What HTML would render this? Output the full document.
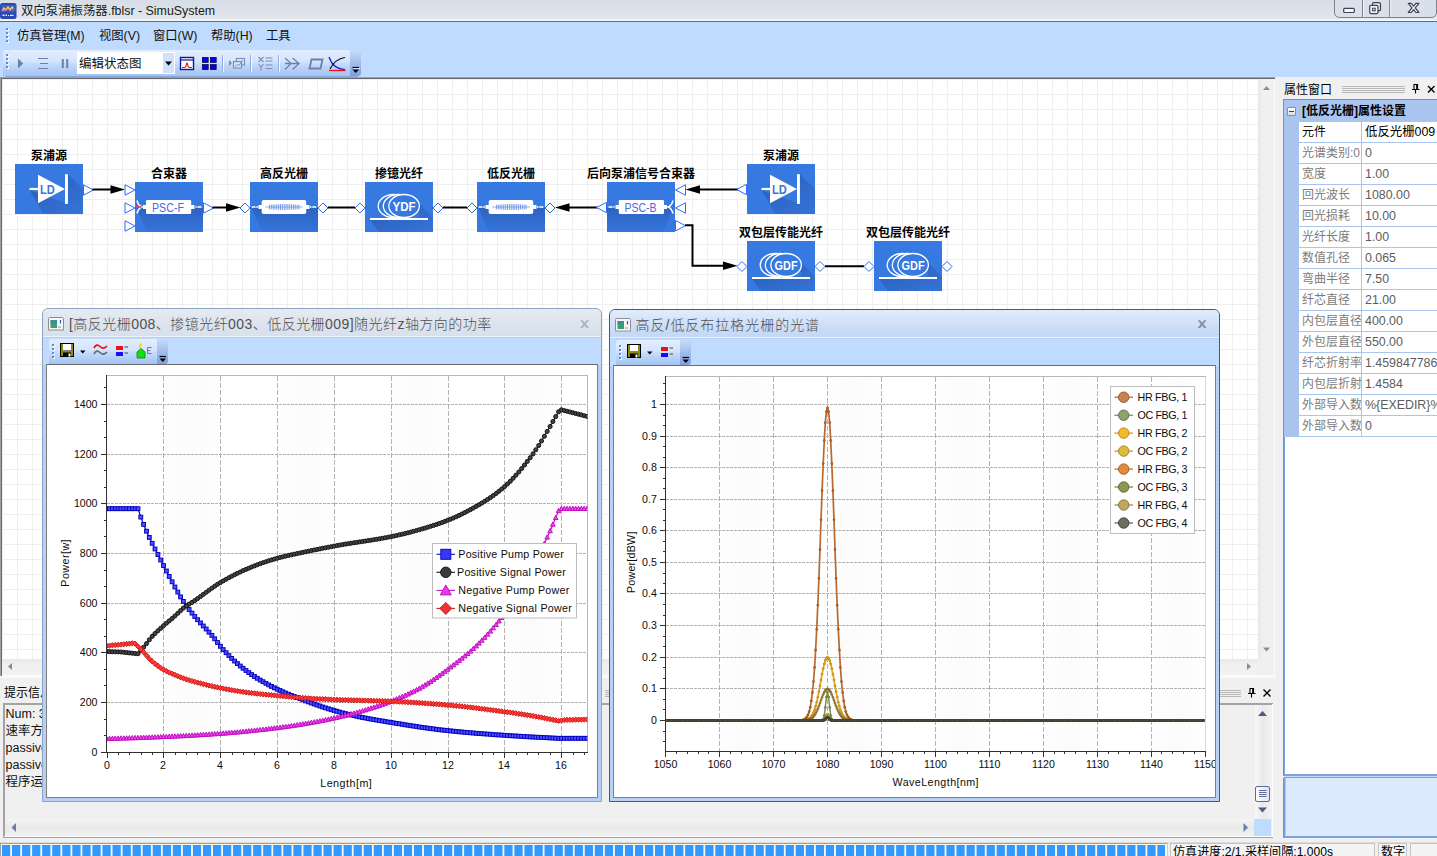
<!DOCTYPE html>
<html lang="zh"><head><meta charset="utf-8"><title>SimuSystem</title>
<style>
*{box-sizing:border-box;margin:0;padding:0}
html,body{width:1437px;height:856px;overflow:hidden;background:#f0f0f0}
body{position:relative;font-family:"Liberation Sans","Noto Sans CJK SC",sans-serif;font-size:12px;color:#000}
.abs{position:absolute}
#titlebar{left:0;top:0;width:1437px;height:21px;background:linear-gradient(#d7dde6,#e1e6ec 85%,#f4f6f8 96%)}
#titlebar .t{left:21px;top:1px;height:21px;line-height:21px;font-size:12.4px;color:#1a1a1a;white-space:nowrap}
#menubar{left:0;top:21px;width:1437px;height:57px;background:#bfdbff;border-top:1px solid #6c6c6c}
.menu{top:27px;height:18px;line-height:18px;font-size:12.3px;white-space:nowrap;color:#111}
svg{position:absolute;overflow:visible}
svg text{font-family:"Liberation Sans","Noto Sans CJK SC",sans-serif}
</style></head>
<body>
<div id="titlebar" class="abs"><div class="t abs">双向泵浦振荡器.fblsr - SimuSystem</div></div>
<div id="menubar" class="abs"></div>
<div class="menu abs" style="left:17px">仿真管理(M)</div>
<div class="menu abs" style="left:99px">视图(V)</div>
<div class="menu abs" style="left:153px">窗口(W)</div>
<div class="menu abs" style="left:211px">帮助(H)</div>
<div class="menu abs" style="left:266px">工具</div>
<svg style="left:-0.500px;top:2px" width="20" height="20" viewBox="0 0 20 20">
<rect x="0" y="1" width="16.500" height="16" rx="2.500" fill="#2a49b2"/>
<rect x="1.5" y="3" width="14" height="7" fill="#3b5cc0"/>
<path d="M2 9 L4 6 L6 8 L8 5 L10 8 L12 5 L14 7" stroke="#e8d84a" stroke-width="1.4" fill="none"/>
<path d="M2 8 L5 9 L8 7 L11 9 L14 6" stroke="#e04aa0" stroke-width="1" fill="none"/>
<path d="M2.500 12.500 h2 v1.600 h-2z M5.500 12.500 h1.500 v1.600 h-1.500z M8 13 h1 v1.100 h-1z M10 12.800 h3.500 v1.300 h-3.500z" fill="#e9ecf6"/>
</svg>
<svg style="left:1330px;top:0" width="107" height="21" viewBox="0 0 107 21">
<path d="M4.5 -1 V12 Q4.500 17.500 10 17.500 H101 Q106.500 17.500 106.500 12 V-1" fill="#d9e0e9" stroke="#7b8492" stroke-width="1"/>
<path d="M32.500 0 V17 M59.600 0 V17" stroke="#7b8492" stroke-width="1"/>
<path d="M33.500 0 V17 M60.600 0 V17" stroke="#eef2f7" stroke-width="1"/>
<rect x="13.700" y="8.300" width="10.600" height="4.200" rx="1" fill="#f4f4f0" stroke="#3c4258" stroke-width="1.200"/>
<rect x="42.500" y="2.700" width="8" height="8" rx="1.300" fill="#eceef2" stroke="#3c4258" stroke-width="1.200"/>
<rect x="39.700" y="5.300" width="8.300" height="8.300" rx="1.300" fill="#f4f4f0" stroke="#3c4258" stroke-width="1.200"/>
<rect x="42.600" y="8.200" width="2.600" height="2.600" fill="#d9e0e9" stroke="#3c4258" stroke-width="1"/>
<path d="M78.300 3.300 H81.300 L83.600 6.200 L85.900 3.300 H88.900 L85.200 7.900 L88.900 12.500 H85.900 L83.600 9.600 L81.300 12.500 H78.300 L82 7.900 Z" fill="#f4f4f0" stroke="#3c4258" stroke-width="1.200" stroke-linejoin="round"/>
</svg>
<svg style="left:0;top:0" width="400" height="80" viewBox="0 0 400 80"><defs><linearGradient id="tbg" x1="0" y1="0" x2="0" y2="1"><stop offset="0" stop-color="#e3eefe"/><stop offset="0.45" stop-color="#d3e4fd"/><stop offset="0.55" stop-color="#c3dafb"/><stop offset="1" stop-color="#a3c3f2"/></linearGradient>
<linearGradient id="tbo" x1="0" y1="0" x2="0" y2="1"><stop offset="0" stop-color="#c6dbfa"/><stop offset="1" stop-color="#7ea0dc"/></linearGradient></defs><rect x="6" y="28" width="2" height="2" fill="#5a8ad8"/><rect x="7" y="29" width="2" height="2" fill="#ffffff"/><rect x="6" y="28" width="2" height="2" fill="#5a8ad8"/><rect x="6" y="32" width="2" height="2" fill="#5a8ad8"/><rect x="7" y="33" width="2" height="2" fill="#ffffff"/><rect x="6" y="32" width="2" height="2" fill="#5a8ad8"/><rect x="6" y="36" width="2" height="2" fill="#5a8ad8"/><rect x="7" y="37" width="2" height="2" fill="#ffffff"/><rect x="6" y="36" width="2" height="2" fill="#5a8ad8"/><rect x="6" y="40" width="2" height="2" fill="#5a8ad8"/><rect x="7" y="41" width="2" height="2" fill="#ffffff"/><rect x="6" y="40" width="2" height="2" fill="#5a8ad8"/><path d="M3 76 V53 Q3 50 6 50 H358 Q361 50 361 53 V73 Q361 76 358 76 Z" fill="url(#tbo)"/><path d="M3 75 V53 Q3 50 6 50 H350 V76 H5 Q3 76 3 75 Z" fill="url(#tbg)"/><path d="M5 76.500 H358" stroke="#86a6de" stroke-width="1"/><rect x="6" y="54" width="2" height="2" fill="#5a8ad8"/><rect x="7" y="55" width="2" height="2" fill="#ffffff"/><rect x="6" y="54" width="2" height="2" fill="#5a8ad8"/><rect x="6" y="58" width="2" height="2" fill="#5a8ad8"/><rect x="7" y="59" width="2" height="2" fill="#ffffff"/><rect x="6" y="58" width="2" height="2" fill="#5a8ad8"/><rect x="6" y="62" width="2" height="2" fill="#5a8ad8"/><rect x="7" y="63" width="2" height="2" fill="#ffffff"/><rect x="6" y="62" width="2" height="2" fill="#5a8ad8"/><rect x="6" y="66" width="2" height="2" fill="#5a8ad8"/><rect x="7" y="67" width="2" height="2" fill="#ffffff"/><rect x="6" y="66" width="2" height="2" fill="#5a8ad8"/><path d="M18 58.500 L23.200 63.500 L18 68.500 Z" fill="#6f80a6"/><path d="M38 58.500 H48 M40 63.500 H48 M38 68.500 H48" stroke="#6f80a6" stroke-width="1.200"/><path d="M62.800 59 V68 M67.200 59 V68" stroke="#6f80a6" stroke-width="2"/><rect x="77" y="52" width="86" height="22" fill="#ffffff"/><rect x="162.500" y="52.500" width="12" height="21" fill="#cfe1fb" stroke="#ffffff" stroke-width="1"/><path d="M165 61.500 H172 L168.500 65.500 Z" fill="#000"/><text x="79" y="67.500" font-size="12.500" fill="#111">编辑状态图</text><rect x="180.500" y="57.500" width="13" height="12" fill="#fff" stroke="#0a14a0" stroke-width="1.400"/><path d="M180.500 60 H193.500" stroke="#0a14a0" stroke-width="1.200"/><path d="M182 67.500 H184.500 Q186 67.500 186.500 64 Q187 62 187.500 64 Q188 67.500 189.500 67.500 H192" stroke="#e01010" stroke-width="1.100" fill="none"/><rect x="202.4" y="57.4" width="5.800" height="5" fill="#0000f0" stroke="#00003c" stroke-width="0.700"/><rect x="202.4" y="64.6" width="5.800" height="5" fill="#0000f0" stroke="#00003c" stroke-width="0.700"/><rect x="210.4" y="57.4" width="5.800" height="5" fill="#0000f0" stroke="#00003c" stroke-width="0.700"/><rect x="210.4" y="64.6" width="5.800" height="5" fill="#0000f0" stroke="#00003c" stroke-width="0.700"/><path d="M222.5 55 V72" stroke="#8fb0e6" stroke-width="1"/><path d="M223.5 55 V72" stroke="#f2f7ff" stroke-width="1"/><path d="M250.5 55 V72" stroke="#8fb0e6" stroke-width="1"/><path d="M251.5 55 V72" stroke="#f2f7ff" stroke-width="1"/><path d="M278.5 55 V72" stroke="#8fb0e6" stroke-width="1"/><path d="M279.5 55 V72" stroke="#f2f7ff" stroke-width="1"/><path d="M229 60 L232 63 L229 66 Z" fill="#7c8cae"/><rect x="236.500" y="58.500" width="8" height="6.500" fill="none" stroke="#7c8cae" stroke-width="1.100"/><rect x="233.500" y="61.500" width="8" height="6.500" fill="#d3e2f9" stroke="#7c8cae" stroke-width="1.100"/><path d="M235 66.500 L237.500 64.500 L239 65.500 L243 60" stroke="#7c8cae" stroke-width="0.900" fill="none"/><path d="M258.500 57 L263.500 62 M263.500 57 L258.500 62 M258.500 64 L261 67 L263.500 64 M261 67 V70.500" stroke="#7c8cae" stroke-width="1.100" fill="none"/><path d="M265.500 58 H272.500 M265.500 61 H272.500 M265.500 65 H272.500 M265.500 68.500 H272.500" stroke="#7c8cae" stroke-width="1.100"/><path d="M285 58 L291 63.500 L285 69.500 M285 63.500 H299 M292.500 58 L299 63.500 L292.500 69.500" stroke="#6f80a6" stroke-width="1.300" fill="none"/><path d="M311.500 59.500 H322.500 L320.500 68.500 H309.500 Z" stroke="#6f80a6" stroke-width="1.800" fill="none"/><path d="M329 57 Q333 69 345 69.500" stroke="#1818e0" stroke-width="1.200" fill="none"/><path d="M330 69 Q335 59 345 57.500" stroke="#101010" stroke-width="1.200" fill="none"/><path d="M329 70.500 H345.500" stroke="#f01010" stroke-width="1.300"/><path d="M352.500 67.500 H359" stroke="#000" stroke-width="1.200"/><path d="M352.500 69.500 H359 L355.750 73 Z" fill="#000"/><path d="M353.500 68.500 H360" stroke="#fff" stroke-width="1" opacity="0.700"/></svg>
<div class="abs" style="left:0;top:77px;width:1275px;height:599px;background:#a0a0a0"></div>
<div class="abs" style="left:1px;top:78px;width:1274px;height:598px;background:#696969"></div>
<div class="abs" style="left:2px;top:79px;width:1273px;height:597px;background:#fbfbfb"></div>
<div class="abs" style="left:2px;top:79px;width:1256px;height:580px;background-color:#fff;background-image:linear-gradient(to right,#efefef 1px,transparent 1px),linear-gradient(to bottom,#efefef 1px,transparent 1px);background-size:15px 15px;background-position:0px 0px"></div>
<div class="abs" style="left:1258px;top:79px;width:16px;height:580px;background:linear-gradient(to right,#e8e8e8,#f0f0f0 30%,#f1f1f1)"></div>
<div class="abs" style="left:2px;top:659px;width:1256px;height:16px;background:linear-gradient(#e8e8e8,#f0f0f0 30%,#f1f1f1)"></div>
<div class="abs" style="left:1258px;top:659px;width:16px;height:16px;background:#f0f0f0"></div>
<svg style="left:0;top:0" width="1437" height="856" viewBox="0 0 1437 856">
<defs>
<linearGradient id="shd" x1="0" y1="0" x2="1" y2="1"><stop offset="0" stop-color="#2b5db8"/><stop offset="1" stop-color="#3474d8"/></linearGradient>
<linearGradient id="shv" x1="0" y1="0" x2="0" y2="1"><stop offset="0" stop-color="#2e63bf"/><stop offset="1" stop-color="#3575dc"/></linearGradient>
<linearGradient id="shd2" x1="1" y1="0" x2="0" y2="1"><stop offset="0" stop-color="#2b5db8"/><stop offset="1" stop-color="#3474d8"/></linearGradient>
</defs>
<path d="M1263 90 L1266.500 86 L1270 90 Z" fill="#8c8c8c"/><path d="M1263 647.500 L1266.500 651.500 L1270 647.500 Z" fill="#8c8c8c"/><path d="M12 663 L8 666.500 L12 670 Z" fill="#8c8c8c"/><path d="M1247 663 L1251 666.500 L1247 670 Z" fill="#8c8c8c"/><text x="49" y="160" font-size="12" font-weight="700" text-anchor="middle" fill="#000">泵浦源</text><rect x="15" y="164" width="68" height="50" fill="#3679e0"/><path d="M29.5 190 L43.5 214 H83 V189 L68 174 V204 Z" fill="url(#shd)"/><path d="M29.5 189 H39" stroke="#fff" stroke-width="2.200"/><path d="M38 174.8 L65 189 L38 203.3 Z" fill="#fff"/><rect x="65" y="174.2" width="2.900" height="29.700" fill="#fff"/><text x="39.9" y="193.6" font-size="12.500" font-weight="700" fill="#3a74e0" textLength="14.800" lengthAdjust="spacingAndGlyphs">LD</text><path d="M83.5 184.8 L93.5 190 L83.5 195.2 Z" fill="#fff" stroke="#2f6bff" stroke-width="1"/><path d="M92.5 189.5 H112" stroke="#000" stroke-width="2"/><path d="M125 189.5 L110.5 185.3 V193.7 Z" fill="#000"/><text x="169" y="178" font-size="12" font-weight="700" text-anchor="middle" fill="#000">合束器</text><rect x="135" y="182" width="68" height="50" fill="#3679e0"/><path d="M136.5 208 L147 232 H203 V208 Z" fill="url(#shv)"/><g><path d="M137 200.5 Q138.5 206 142 207 Q138.5 208 137 213.5" stroke="#fff" stroke-width="1.500" fill="none"/><path d="M136.5 207 H141.5" stroke="#ff3a3a" stroke-width="1.700"/><rect x="143" y="205" width="3.500" height="4" fill="#fff"/><rect x="146" y="200" width="45.200" height="14" rx="1.200" fill="#fff"/><rect x="191" y="205" width="3.500" height="4" fill="#fff"/><path d="M195.5 207 H201.5" stroke="#fff" stroke-width="1.600" stroke-dasharray="1.200 0.800 10 0"/></g><text x="152" y="211.6" font-size="12.500" fill="#466be0" textLength="32" lengthAdjust="spacingAndGlyphs">PSC-F</text><path d="M125 184.8 L135 190 L125 195.2 Z" fill="#fff" stroke="#2f6bff" stroke-width="1"/><path d="M125 202.8 L135 208 L125 213.2 Z" fill="#fff" stroke="#2f6bff" stroke-width="1"/><path d="M125 220.8 L135 226 L125 231.2 Z" fill="#fff" stroke="#2f6bff" stroke-width="1"/><path d="M203.5 202.8 L213.5 208 L203.5 213.2 Z" fill="#fff" stroke="#2f6bff" stroke-width="1"/><path d="M212.5 207.5 H227" stroke="#000" stroke-width="2"/><path d="M240.5 207.5 L226.0 203.3 V211.7 Z" fill="#000"/><text x="284" y="178" font-size="12" font-weight="700" text-anchor="middle" fill="#000">高反光栅</text><rect x="250" y="182" width="68" height="50" fill="#3679e0"/><path d="M251.5 208 L262 232 H318 V208 Z" fill="url(#shv)"/><path d="M251.7 207 H258" stroke="#fff" stroke-width="1.600" stroke-dasharray="3.800 0.800"/><path d="M310 207 H316.3" stroke="#fff" stroke-width="1.600" stroke-dasharray="1.500 0.800 4 0"/><rect x="258.5" y="205" width="3.500" height="4" fill="#fff"/><rect x="306" y="205" width="3.500" height="4" fill="#fff"/><rect x="261.7" y="200" width="44.500" height="14" rx="1.800" fill="#fff"/><path d="M265 207 H303" stroke="#b9cdf2" stroke-width="1.400"/><path d="M269.40 204.70 V209.30 M271.25 204.59 V209.41 M273.10 204.47 V209.53 M274.95 204.36 V209.64 M276.80 204.25 V209.75 M278.65 204.14 V209.86 M280.50 204.03 V209.97 M282.35 203.91 V210.09 M284.20 203.80 V210.20 M286.05 203.91 V210.09 M287.90 204.03 V209.97 M289.75 204.14 V209.86 M291.60 204.25 V209.75 M293.45 204.36 V209.64 M295.30 204.47 V209.53 M297.15 204.59 V209.41 M299.00 204.70 V209.30 " stroke="#6a8fdf" stroke-width="0.900"/><path d="M240 208 L245 203 L250 208 L245 213 Z" fill="#fff" stroke="#2f6bff" stroke-width="1"/><path d="M318 208 L323 203 L328 208 L323 213 Z" fill="#fff" stroke="#2f6bff" stroke-width="1"/><path d="M328 207.5 H355" stroke="#000" stroke-width="2"/><text x="399" y="178" font-size="12" font-weight="700" text-anchor="middle" fill="#000">掺镱光纤</text><rect x="365" y="182" width="68" height="50" fill="#3679e0"/><path d="M370 220 L379 232 H433 V217.6 L419 203.6 V220 Z" fill="url(#shd)"/><ellipse cx="393.5" cy="206" rx="15.300" ry="11.500" fill="#3679e0" stroke="#fff" stroke-width="1.300"/><ellipse cx="398.6" cy="206" rx="15.300" ry="11.500" fill="#3679e0" stroke="#fff" stroke-width="1.300"/><ellipse cx="404.1" cy="206" rx="15.300" ry="11.500" fill="#3679e0" stroke="#fff" stroke-width="1.300"/><path d="M370 219 H428" stroke="#fff" stroke-width="1.900"/><text x="392.6" y="210.7" font-size="12.500" font-weight="700" fill="#fff" textLength="23" lengthAdjust="spacingAndGlyphs">YDF</text><path d="M355 208 L360 203 L365 208 L360 213 Z" fill="#fff" stroke="#2f6bff" stroke-width="1"/><path d="M433 208 L438 203 L443 208 L438 213 Z" fill="#fff" stroke="#2f6bff" stroke-width="1"/><path d="M443 207.5 H467" stroke="#000" stroke-width="2"/><text x="511" y="178" font-size="12" font-weight="700" text-anchor="middle" fill="#000">低反光栅</text><rect x="477" y="182" width="68" height="50" fill="#3679e0"/><path d="M478.5 208 L489 232 H545 V208 Z" fill="url(#shv)"/><path d="M478.7 207 H485" stroke="#fff" stroke-width="1.600" stroke-dasharray="3.800 0.800"/><path d="M537 207 H543.3" stroke="#fff" stroke-width="1.600" stroke-dasharray="1.500 0.800 4 0"/><rect x="485.5" y="205" width="3.500" height="4" fill="#fff"/><rect x="533" y="205" width="3.500" height="4" fill="#fff"/><rect x="488.7" y="200" width="44.500" height="14" rx="1.800" fill="#fff"/><path d="M492 207 H530" stroke="#b9cdf2" stroke-width="1.400"/><path d="M496.40 204.70 V209.30 M498.25 204.59 V209.41 M500.10 204.47 V209.53 M501.95 204.36 V209.64 M503.80 204.25 V209.75 M505.65 204.14 V209.86 M507.50 204.03 V209.97 M509.35 203.91 V210.09 M511.20 203.80 V210.20 M513.05 203.91 V210.09 M514.90 204.03 V209.97 M516.75 204.14 V209.86 M518.60 204.25 V209.75 M520.45 204.36 V209.64 M522.30 204.47 V209.53 M524.15 204.59 V209.41 M526.00 204.70 V209.30 " stroke="#6a8fdf" stroke-width="0.900"/><path d="M467 208 L472 203 L477 208 L472 213 Z" fill="#fff" stroke="#2f6f8f" stroke-width="1"/><path d="M545 208 L550 203 L555 208 L550 213 Z" fill="#fff" stroke="#2f6f8f" stroke-width="1"/><path d="M555 207.5 L569.5 203.3 V211.7 Z" fill="#000"/><path d="M569 207.5 H597.5" stroke="#000" stroke-width="2"/><text x="641" y="178" font-size="12" font-weight="700" text-anchor="middle" fill="#000">后向泵浦信号合束器</text><rect x="607" y="182" width="68" height="50" fill="#3679e0"/><path d="M673.5 208 L663 232 H607 V208 Z" fill="url(#shv)"/><g transform="translate(1282,0) scale(-1,1)"><path d="M609 200.5 Q610.5 206 614 207 Q610.5 208 609 213.5" stroke="#fff" stroke-width="1.500" fill="none"/><rect x="615" y="205" width="3.500" height="4" fill="#fff"/><rect x="618" y="200" width="45.200" height="14" rx="1.200" fill="#fff"/><rect x="663" y="205" width="3.500" height="4" fill="#fff"/><path d="M667.5 207 H673.5" stroke="#fff" stroke-width="1.600" stroke-dasharray="1.200 0.800 10 0"/></g><text x="624.5" y="211.6" font-size="12.500" fill="#466be0" textLength="32" lengthAdjust="spacingAndGlyphs">PSC-B</text><path d="M606.5 202.3 L596.5 207.5 L606.5 212.7 Z" fill="#fff" stroke="#2f6bff" stroke-width="1"/><path d="M685.5 184.8 L675.5 190 L685.5 195.2 Z" fill="#fff" stroke="#2f6bff" stroke-width="1"/><path d="M685.5 202.8 L675.5 208 L685.5 213.2 Z" fill="#fff" stroke="#2f6bff" stroke-width="1"/><path d="M675.5 220.5 L685.5 225.7 L675.5 230.89999999999998 Z" fill="#fff" stroke="#2f6bff" stroke-width="1"/><text x="781" y="160" font-size="12" font-weight="700" text-anchor="middle" fill="#000">泵浦源</text><rect x="747" y="164" width="68" height="50" fill="#3679e0"/><path d="M761.5 190 L775.5 214 H815 V189 L800 174 V204 Z" fill="url(#shd)"/><path d="M761.5 189 H771" stroke="#fff" stroke-width="2.200"/><path d="M770 174.8 L797 189 L770 203.3 Z" fill="#fff"/><rect x="797" y="174.2" width="2.900" height="29.700" fill="#fff"/><text x="771.9" y="193.6" font-size="12.500" font-weight="700" fill="#3a74e0" textLength="14.800" lengthAdjust="spacingAndGlyphs">LD</text><path d="M746.5 184.3 L736.5 189.5 L746.5 194.7 Z" fill="#fff" stroke="#2f6bff" stroke-width="1"/><path d="M685.5 189.5 L700.0 185.3 V193.7 Z" fill="#000"/><path d="M699 189.5 H737.5" stroke="#000" stroke-width="2"/><path d="M685 225.300 H692.500 V265.800 H724" stroke="#000" stroke-width="2" fill="none"/><path d="M737.5 265.8 L723.0 261.6 V270.0 Z" fill="#000"/><text x="781" y="237" font-size="12" font-weight="700" text-anchor="middle" fill="#000">双包层传能光纤</text><rect x="747" y="241" width="68" height="50" fill="#3679e0"/><path d="M752 279 L761 291 H815 V276.6 L801 262.6 V279 Z" fill="url(#shd)"/><ellipse cx="775.5" cy="265" rx="15.300" ry="11.500" fill="#3679e0" stroke="#fff" stroke-width="1.300"/><ellipse cx="780.6" cy="265" rx="15.300" ry="11.500" fill="#3679e0" stroke="#fff" stroke-width="1.300"/><ellipse cx="786.1" cy="265" rx="15.300" ry="11.500" fill="#3679e0" stroke="#fff" stroke-width="1.300"/><path d="M752 278 H810" stroke="#fff" stroke-width="1.900"/><text x="774.6" y="269.7" font-size="12.500" font-weight="700" fill="#fff" textLength="23" lengthAdjust="spacingAndGlyphs">GDF</text><path d="M737 266.5 L742 261.5 L747 266.5 L742 271.5 Z" fill="#fff" stroke="#2f6bff" stroke-width="1"/><path d="M815 266.5 L820 261.5 L825 266.5 L820 271.5 Z" fill="#fff" stroke="#2f6bff" stroke-width="1"/><path d="M825 266.2 H864" stroke="#000" stroke-width="2"/><text x="908" y="237" font-size="12" font-weight="700" text-anchor="middle" fill="#000">双包层传能光纤</text><rect x="874" y="241" width="68" height="50" fill="#3679e0"/><path d="M879 279 L888 291 H942 V276.6 L928 262.6 V279 Z" fill="url(#shd)"/><ellipse cx="902.5" cy="265" rx="15.300" ry="11.500" fill="#3679e0" stroke="#fff" stroke-width="1.300"/><ellipse cx="907.6" cy="265" rx="15.300" ry="11.500" fill="#3679e0" stroke="#fff" stroke-width="1.300"/><ellipse cx="913.1" cy="265" rx="15.300" ry="11.500" fill="#3679e0" stroke="#fff" stroke-width="1.300"/><path d="M879 278 H937" stroke="#fff" stroke-width="1.900"/><text x="901.6" y="269.7" font-size="12.500" font-weight="700" fill="#fff" textLength="23" lengthAdjust="spacingAndGlyphs">GDF</text><path d="M864 266.5 L869 261.5 L874 266.5 L869 271.5 Z" fill="#fff" stroke="#2f6bff" stroke-width="1"/><path d="M942 266.5 L947 261.5 L952 266.5 L947 271.5 Z" fill="#fff" stroke="#2f6bff" stroke-width="1"/></svg>
<div class="abs" style="left:1275px;top:77px;width:162px;height:766px;background:#f0f0f0"></div>
<div class="abs" style="left:1284px;top:82px;font-size:12px;line-height:16px;white-space:nowrap">属性窗口</div>
<div class="abs" style="left:1283px;top:99px;width:154px;height:677px;background:#fff;border:1px solid #8e8e8e;border-right:none"></div>
<div class="abs" style="left:1284px;top:100px;width:153px;height:675px;border:1px solid #7da2e0;border-right:none;border-top:none"></div>
<div class="abs" style="left:1284px;top:100px;width:153px;height:22px;background:#a9c5ef"></div>
<div class="abs" style="left:1284px;top:121px;width:15px;height:316px;background:#a9c5ef"></div>
<div class="abs" style="left:1302px;top:103px;font-size:12px;line-height:17px;font-weight:700;white-space:nowrap">[低反光栅]属性设置</div>
<div class="abs" style="left:1287px;top:107px;width:9px;height:9px;border:1px solid #8e8e8e;border-radius:1px;background:linear-gradient(#fff,#dcdcdc)"></div>
<div class="abs" style="left:1289px;top:111px;width:5px;height:1px;background:#2a3c90"></div>
<div class="abs" style="left:1299px;top:122px;width:62px;height:20px;overflow:hidden;white-space:nowrap;font-size:12px;line-height:20px;padding-left:3px;color:#000">元件</div><div class="abs" style="left:1362px;top:122px;width:75px;height:20px;overflow:hidden;white-space:nowrap;font-size:12.400px;line-height:20px;padding-left:3px;color:#000">低反光栅009</div><div class="abs" style="left:1299px;top:142px;width:138px;height:1px;background:#a9c5ef"></div>
<div class="abs" style="left:1299px;top:143px;width:62px;height:20px;overflow:hidden;white-space:nowrap;font-size:12px;line-height:20px;padding-left:3px;color:#7c7c7c">光谱类别:0</div><div class="abs" style="left:1362px;top:143px;width:75px;height:20px;overflow:hidden;white-space:nowrap;font-size:12.400px;line-height:20px;padding-left:3px;color:#5c5c5c">0</div><div class="abs" style="left:1299px;top:163px;width:138px;height:1px;background:#a9c5ef"></div>
<div class="abs" style="left:1299px;top:164px;width:62px;height:20px;overflow:hidden;white-space:nowrap;font-size:12px;line-height:20px;padding-left:3px;color:#7c7c7c">宽度</div><div class="abs" style="left:1362px;top:164px;width:75px;height:20px;overflow:hidden;white-space:nowrap;font-size:12.400px;line-height:20px;padding-left:3px;color:#5c5c5c">1.00</div><div class="abs" style="left:1299px;top:184px;width:138px;height:1px;background:#a9c5ef"></div>
<div class="abs" style="left:1299px;top:185px;width:62px;height:20px;overflow:hidden;white-space:nowrap;font-size:12px;line-height:20px;padding-left:3px;color:#7c7c7c">回光波长</div><div class="abs" style="left:1362px;top:185px;width:75px;height:20px;overflow:hidden;white-space:nowrap;font-size:12.400px;line-height:20px;padding-left:3px;color:#5c5c5c">1080.00</div><div class="abs" style="left:1299px;top:205px;width:138px;height:1px;background:#a9c5ef"></div>
<div class="abs" style="left:1299px;top:206px;width:62px;height:20px;overflow:hidden;white-space:nowrap;font-size:12px;line-height:20px;padding-left:3px;color:#7c7c7c">回光损耗</div><div class="abs" style="left:1362px;top:206px;width:75px;height:20px;overflow:hidden;white-space:nowrap;font-size:12.400px;line-height:20px;padding-left:3px;color:#5c5c5c">10.00</div><div class="abs" style="left:1299px;top:226px;width:138px;height:1px;background:#a9c5ef"></div>
<div class="abs" style="left:1299px;top:227px;width:62px;height:20px;overflow:hidden;white-space:nowrap;font-size:12px;line-height:20px;padding-left:3px;color:#7c7c7c">光纤长度</div><div class="abs" style="left:1362px;top:227px;width:75px;height:20px;overflow:hidden;white-space:nowrap;font-size:12.400px;line-height:20px;padding-left:3px;color:#5c5c5c">1.00</div><div class="abs" style="left:1299px;top:247px;width:138px;height:1px;background:#a9c5ef"></div>
<div class="abs" style="left:1299px;top:248px;width:62px;height:20px;overflow:hidden;white-space:nowrap;font-size:12px;line-height:20px;padding-left:3px;color:#7c7c7c">数值孔径</div><div class="abs" style="left:1362px;top:248px;width:75px;height:20px;overflow:hidden;white-space:nowrap;font-size:12.400px;line-height:20px;padding-left:3px;color:#5c5c5c">0.065</div><div class="abs" style="left:1299px;top:268px;width:138px;height:1px;background:#a9c5ef"></div>
<div class="abs" style="left:1299px;top:269px;width:62px;height:20px;overflow:hidden;white-space:nowrap;font-size:12px;line-height:20px;padding-left:3px;color:#7c7c7c">弯曲半径</div><div class="abs" style="left:1362px;top:269px;width:75px;height:20px;overflow:hidden;white-space:nowrap;font-size:12.400px;line-height:20px;padding-left:3px;color:#5c5c5c">7.50</div><div class="abs" style="left:1299px;top:289px;width:138px;height:1px;background:#a9c5ef"></div>
<div class="abs" style="left:1299px;top:290px;width:62px;height:20px;overflow:hidden;white-space:nowrap;font-size:12px;line-height:20px;padding-left:3px;color:#7c7c7c">纤芯直径</div><div class="abs" style="left:1362px;top:290px;width:75px;height:20px;overflow:hidden;white-space:nowrap;font-size:12.400px;line-height:20px;padding-left:3px;color:#5c5c5c">21.00</div><div class="abs" style="left:1299px;top:310px;width:138px;height:1px;background:#a9c5ef"></div>
<div class="abs" style="left:1299px;top:311px;width:62px;height:20px;overflow:hidden;white-space:nowrap;font-size:12px;line-height:20px;padding-left:3px;color:#7c7c7c">内包层直径</div><div class="abs" style="left:1362px;top:311px;width:75px;height:20px;overflow:hidden;white-space:nowrap;font-size:12.400px;line-height:20px;padding-left:3px;color:#5c5c5c">400.00</div><div class="abs" style="left:1299px;top:331px;width:138px;height:1px;background:#a9c5ef"></div>
<div class="abs" style="left:1299px;top:332px;width:62px;height:20px;overflow:hidden;white-space:nowrap;font-size:12px;line-height:20px;padding-left:3px;color:#7c7c7c">外包层直径</div><div class="abs" style="left:1362px;top:332px;width:75px;height:20px;overflow:hidden;white-space:nowrap;font-size:12.400px;line-height:20px;padding-left:3px;color:#5c5c5c">550.00</div><div class="abs" style="left:1299px;top:352px;width:138px;height:1px;background:#a9c5ef"></div>
<div class="abs" style="left:1299px;top:353px;width:62px;height:20px;overflow:hidden;white-space:nowrap;font-size:12px;line-height:20px;padding-left:3px;color:#7c7c7c">纤芯折射率</div><div class="abs" style="left:1362px;top:353px;width:75px;height:20px;overflow:hidden;white-space:nowrap;font-size:12.400px;line-height:20px;padding-left:3px;color:#5c5c5c">1.459847786</div><div class="abs" style="left:1299px;top:373px;width:138px;height:1px;background:#a9c5ef"></div>
<div class="abs" style="left:1299px;top:374px;width:62px;height:20px;overflow:hidden;white-space:nowrap;font-size:12px;line-height:20px;padding-left:3px;color:#7c7c7c">内包层折射</div><div class="abs" style="left:1362px;top:374px;width:75px;height:20px;overflow:hidden;white-space:nowrap;font-size:12.400px;line-height:20px;padding-left:3px;color:#5c5c5c">1.4584</div><div class="abs" style="left:1299px;top:394px;width:138px;height:1px;background:#a9c5ef"></div>
<div class="abs" style="left:1299px;top:395px;width:62px;height:20px;overflow:hidden;white-space:nowrap;font-size:12px;line-height:20px;padding-left:3px;color:#7c7c7c">外部导入数</div><div class="abs" style="left:1362px;top:395px;width:75px;height:20px;overflow:hidden;white-space:nowrap;font-size:12.400px;line-height:20px;padding-left:3px;color:#5c5c5c">%{EXEDIR}%</div><div class="abs" style="left:1299px;top:415px;width:138px;height:1px;background:#a9c5ef"></div>
<div class="abs" style="left:1299px;top:416px;width:62px;height:20px;overflow:hidden;white-space:nowrap;font-size:12px;line-height:20px;padding-left:3px;color:#7c7c7c">外部导入数</div><div class="abs" style="left:1362px;top:416px;width:75px;height:20px;overflow:hidden;white-space:nowrap;font-size:12.400px;line-height:20px;padding-left:3px;color:#5c5c5c">0</div><div class="abs" style="left:1299px;top:436px;width:138px;height:1px;background:#a9c5ef"></div>
<div class="abs" style="left:1361px;top:122px;width:1px;height:315px;background:#a9c5ef"></div>
<div class="abs" style="left:1284px;top:775px;width:153px;height:3px;background:#c9dcf8;border-top:1px solid #7da2e0;border-bottom:1px solid #7da2e0"></div>
<div class="abs" style="left:1283px;top:778px;width:154px;height:60px;background:#ddeafd;border:2px solid #7da2e0;border-right:none;border-top:none;border-left:1px solid #8e8e8e;box-shadow:inset 1.500px 0 0 #7da2e0"></div>
<div class="abs" style="left:0;top:676px;width:1275px;height:167px;background:#f0f0f0"></div>
<div class="abs" style="left:0;top:676px;width:1275px;height:2px;background:#fafafa"></div>
<div class="abs" style="left:4px;top:685px;font-size:12px;line-height:16px;white-space:nowrap">提示信息</div>
<div class="abs" style="left:3px;top:703px;width:1270px;height:135px;border:2px solid #a3a3a3;border-right:1px solid #a3a3a3;border-bottom:1px solid #a3a3a3;background:#f0f0f0"></div>
<div class="abs" style="left:1272px;top:704px;width:1px;height:133px;background:#fff"></div><div class="abs" style="left:4px;top:836px;width:1269px;height:1px;background:#fff"></div>
<div class="abs" style="left:5.500px;top:706px;font-size:12.500px;line-height:17px;white-space:nowrap;color:#111">Num: 3</div><div class="abs" style="left:5.500px;top:723px;font-size:12.500px;line-height:17px;white-space:nowrap;color:#111">速率方程</div><div class="abs" style="left:5.500px;top:740px;font-size:12.500px;line-height:17px;white-space:nowrap;color:#111">passive</div><div class="abs" style="left:5.500px;top:757px;font-size:12.500px;line-height:17px;white-space:nowrap;color:#111">passive</div><div class="abs" style="left:5.500px;top:774px;font-size:12.500px;line-height:17px;white-space:nowrap;color:#111">程序运行</div><div class="abs" style="left:1255px;top:705px;width:16px;height:114px;background:linear-gradient(to right,#f8f8f8,#e8e8e8 50%,#f2f2f2)"></div>
<div class="abs" style="left:5px;top:819px;width:1250px;height:17px;background:linear-gradient(#f4f4f4,#e9e9e9 50%,#f2f2f2)"></div>
<div class="abs" style="left:1254px;top:819px;width:17px;height:17px;background:#bfdbff"></div>
<div class="abs" style="left:1255px;top:786px;width:15px;height:16px;border:1px solid #5b6b9c;border-radius:2px;background:linear-gradient(to right,#fdfdfd,#dfe3ee)"></div>
<svg style="left:0;top:0" width="1437" height="856" viewBox="0 0 1437 856">
<path d="M1342 86.500 H1405 M1342 88.500 H1405 M1342 90.500 H1405 M1342 92.500 H1405" stroke="#b9b9b9" stroke-width="1"/>
<path d="M1413.500 84.500 H1417.500 V89.500 M1414 84.500 V89.500 M1412 89.500 H1419.500 M1415.500 90 V93.500 M1416.700 84.500 V89.500" stroke="#000" stroke-width="1.100" fill="none"/>
<path d="M1428 86 L1434.500 92.500 M1434.500 86 L1428 92.500" stroke="#000" stroke-width="1.400"/>
<path d="M605 690.500 H1241 M605 692.500 H1241 M605 694.500 H1241 M605 696.500 H1241" stroke="#b9b9b9" stroke-width="1"/>
<path d="M1249.500 688.500 H1253.500 V693.500 M1250 688.500 V693.500 M1248 693.500 H1255.500 M1251.500 694 V697.500 M1252.700 688.500 V693.500" stroke="#000" stroke-width="1.100" fill="none"/>
<path d="M1263.500 689.500 L1270.500 696.500 M1270.500 689.500 L1263.500 696.500" stroke="#000" stroke-width="1.400"/>
<path d="M1258 716 L1262.500 711 L1267 716 Z" fill="#4b5b8c"/>
<path d="M1258 807.500 L1262.500 812.500 L1267 807.500 Z" fill="#4b5b8c"/>
<path d="M16 823 L11.500 827.500 L16 832 Z" fill="#6b7bac"/>
<path d="M1243.500 823 L1248 827.500 L1243.500 832 Z" fill="#6b7bac"/>
<path d="M1259 790.500 H1266.500 M1259 792.500 H1266.500 M1259 794.500 H1266.500 M1259 796.500 H1266.500" stroke="#5b6b9c" stroke-width="1"/>
</svg>
<div class="abs" style="left:0;top:838px;width:1437px;height:18px;background:#f0f0f0"></div>
<div class="abs" style="left:0;top:842px;width:1437px;height:1px;background:#dcdcdc"></div>
<div class="abs" style="left:0;top:843px;width:1168px;height:13px;border:1px solid #a0a0a0;border-bottom:none;border-right-color:#d0d0d0;background-color:#fbf7ee;background-image:linear-gradient(to right,#3399ff 8px,transparent 8px);background-size:10.060px 12px;background-position:1px 1px;background-repeat:repeat-x"></div>
<div class="abs" style="left:1164.800px;top:844px;width:2.200px;height:12px;background:#fbf7ee"></div>
<div class="abs" style="left:1170px;top:843px;width:205px;height:13px;border:1px solid #c4c4c4;border-bottom:none;background:#f4f4f4;overflow:hidden"><div style="position:absolute;left:2px;top:0px;font-size:12.100px;line-height:17px;white-space:nowrap">仿真进度:2/1,采样间隔:1.000s</div></div>
<div class="abs" style="left:1378px;top:843px;width:29px;height:13px;border:1px solid #c4c4c4;border-bottom:none;background:#f4f4f4;overflow:hidden"><div style="position:absolute;left:2px;top:0px;font-size:12.100px;line-height:17px;white-space:nowrap">数字</div></div>
<div class="abs" style="left:1410px;top:843px;width:27px;height:13px;border:1px solid #c4c4c4;border-bottom:none;border-right:none;background:#f4f4f4"></div>
<div class="abs" style="left:42px;top:308px;width:560px;height:494px;background:#b6cff3;border:1px solid #8fa5c6;border-radius:6px 6px 0 0;overflow:hidden"><div class="abs" style="left:0;top:0;width:560px;height:28px;background:linear-gradient(#e6ebf2,#dde4ee 50%,#d8e0ec);border-bottom:1px solid #eef3fb"></div><div class="abs" style="left:0;top:29px;width:560px;height:27px;background:#bfdbff"></div><div class="abs" style="left:26px;top:4px;font-size:14px;line-height:22px;color:#505050;font-weight:300;white-space:nowrap;letter-spacing:0.45px">[高反光栅008、掺镱光纤003、低反光栅009]随光纤z轴方向的功率</div></div>
<div class="abs" style="left:46px;top:364px;width:552px;height:434px;background:#fff;border:1px solid #7f7f7f;border-top:1px solid #6b6b6b"></div>
<div class="abs" style="left:609px;top:309px;width:611px;height:493px;background:#b9d1f3;border:1px solid #385a9c;border-radius:6px 6px 0 0;overflow:hidden"><div class="abs" style="left:0;top:0;width:611px;height:28px;background:linear-gradient(#e2edfb,#cfe0f8 50%,#c2d8f6);border-bottom:1px solid #eef3fb"></div><div class="abs" style="left:0;top:29px;width:611px;height:27px;background:#bfdbff"></div><div class="abs" style="left:25.6px;top:4px;font-size:14px;line-height:22px;color:#505050;font-weight:300;white-space:nowrap;letter-spacing:0.97px">高反/低反布拉格光栅的光谱</div></div>
<div class="abs" style="left:613px;top:365px;width:603px;height:433px;background:#fff;border:1px solid #7f7f7f;border-top:1px solid #6b6b6b"></div>
<svg style="left:0;top:0" width="1437" height="856" viewBox="0 0 1437 856">
<defs>
<linearGradient id="pbg" x1="0" y1="0" x2="1" y2="0"><stop offset="0" stop-color="#fefefe"/><stop offset="0.5" stop-color="#fbfbfb"/><stop offset="1" stop-color="#fefefe"/></linearGradient>
</defs>
<rect x="48.5" y="317.5" width="15" height="12.500" rx="1" fill="#f6f6f6" stroke="#8e8e8e" stroke-width="1"/><path d="M48.0 330.5 H64.0" stroke="#b5b5b5" stroke-width="1"/><rect x="50.5" y="320.0" width="6.500" height="8" fill="#3f9a78"/><rect x="50.5" y="320.0" width="6.500" height="3.500" fill="#3b86a0" opacity="0.700"/><path d="M60.5 320.0 V323.5" stroke="#2d5fc0" stroke-width="1.200"/><path d="M58.0 327.0 H61.0" stroke="#b0b0b0" stroke-width="1.400"/><rect x="615.5" y="318.5" width="15" height="12.500" rx="1" fill="#f6f6f6" stroke="#8e8e8e" stroke-width="1"/><path d="M615.0 331.5 H631.0" stroke="#b5b5b5" stroke-width="1"/><rect x="617.5" y="321.0" width="6.500" height="8" fill="#3f9a78"/><rect x="617.5" y="321.0" width="6.500" height="3.500" fill="#3b86a0" opacity="0.700"/><path d="M627.5 321.0 V324.5" stroke="#2d5fc0" stroke-width="1.200"/><path d="M625.0 328.0 H628.0" stroke="#b0b0b0" stroke-width="1.400"/><path d="M580.200 320.300 H582.600 L584.600 322.700 L586.600 320.300 H589 L585.800 324.100 L589 328 H586.600 L584.600 325.500 L582.600 328 H580.200 L583.400 324.100 Z" fill="#a9b2c2"/><path d="M1197.700 320.300 H1200.100 L1202.100 322.700 L1204.100 320.300 H1206.500 L1203.300 324.100 L1206.500 328 H1204.100 L1202.100 325.500 L1200.100 328 H1197.700 L1200.900 324.100 Z" fill="#7f8cab"/><path d="M49 364 V342 Q49 339 52 339 H165 Q168 339 168 342 V361 Q168 364 165 364 Z" fill="url(#tbo)"/><path d="M49 363 V342 Q49 339 52 339 H157 V364 H51 Q49 364 49 363 Z" fill="url(#tbg)"/><rect x="52" y="344" width="2" height="2" fill="#5a8ad8"/><rect x="53" y="345" width="2" height="2" fill="#ffffff"/><rect x="52" y="344" width="2" height="2" fill="#5a8ad8"/><rect x="52" y="348" width="2" height="2" fill="#5a8ad8"/><rect x="53" y="349" width="2" height="2" fill="#ffffff"/><rect x="52" y="348" width="2" height="2" fill="#5a8ad8"/><rect x="52" y="352" width="2" height="2" fill="#5a8ad8"/><rect x="53" y="353" width="2" height="2" fill="#ffffff"/><rect x="52" y="352" width="2" height="2" fill="#5a8ad8"/><rect x="52" y="356" width="2" height="2" fill="#5a8ad8"/><rect x="53" y="357" width="2" height="2" fill="#ffffff"/><rect x="52" y="356" width="2" height="2" fill="#5a8ad8"/><rect x="60" y="343" width="14" height="14" fill="#000"/><path d="M61 344 H63 V351 H71 V344 H73 V356 H61 Z" fill="#8a8a10"/><rect x="63" y="344" width="8" height="6.500" fill="#fff"/><rect x="63" y="352.5" width="8" height="4" fill="#000"/><rect x="68.5" y="353.5" width="2" height="3" fill="#fff"/><path d="M80 350.5 H85.5 L82.75 353.5 Z" fill="#000"/><path d="M94 348 Q96.5 343 100 346.5 T107 346" stroke="#f01010" stroke-width="1.700" fill="none"/><path d="M94 354 Q96.5 349 100 352.5 T107 352" stroke="#6a6a6a" stroke-width="1.700" fill="none"/><rect x="116" y="346" width="7" height="4" fill="#f01010"/><rect x="116" y="352" width="7" height="4" fill="#1010f0"/><path d="M124.5 347 H128 M124.5 353 H128" stroke="#7a7a7a" stroke-width="1.600"/><path d="M137 358 V352 L141 348.5 L145 352 V358 Z" fill="#10e010" stroke="#108010" stroke-width="0.800"/><path d="M142 344 Q138.5 344.5 140.5 348" stroke="#f0e000" stroke-width="1.800" fill="none"/><path d="M151.5 347.5 H147.5 V353.5 H151.5 M147.5 350.5 H150.5" stroke="#7a7a7a" stroke-width="1" fill="none"/><path d="M159.5 356.5 H166.0" stroke="#000" stroke-width="1.200"/><path d="M159.5 358.5 H166.0 L162.75 362 Z" fill="#000"/><path d="M616 365 V343 Q616 340 619 340 H688 Q691 340 691 343 V362 Q691 365 688 365 Z" fill="url(#tbo)"/><path d="M616 364 V343 Q616 340 619 340 H680 V365 H618 Q616 365 616 364 Z" fill="url(#tbg)"/><rect x="619" y="345" width="2" height="2" fill="#5a8ad8"/><rect x="620" y="346" width="2" height="2" fill="#ffffff"/><rect x="619" y="345" width="2" height="2" fill="#5a8ad8"/><rect x="619" y="349" width="2" height="2" fill="#5a8ad8"/><rect x="620" y="350" width="2" height="2" fill="#ffffff"/><rect x="619" y="349" width="2" height="2" fill="#5a8ad8"/><rect x="619" y="353" width="2" height="2" fill="#5a8ad8"/><rect x="620" y="354" width="2" height="2" fill="#ffffff"/><rect x="619" y="353" width="2" height="2" fill="#5a8ad8"/><rect x="619" y="357" width="2" height="2" fill="#5a8ad8"/><rect x="620" y="358" width="2" height="2" fill="#ffffff"/><rect x="619" y="357" width="2" height="2" fill="#5a8ad8"/><rect x="627" y="344" width="14" height="14" fill="#000"/><path d="M628 345 H630 V352 H638 V345 H640 V357 H628 Z" fill="#8a8a10"/><rect x="630" y="345" width="8" height="6.500" fill="#fff"/><rect x="630" y="353.5" width="8" height="4" fill="#000"/><rect x="635.5" y="354.5" width="2" height="3" fill="#fff"/><path d="M647 351.5 H652.5 L649.75 354.5 Z" fill="#000"/><rect x="661" y="347" width="7" height="4" fill="#f01010"/><rect x="661" y="353" width="7" height="4" fill="#1010f0"/><path d="M669.5 348 H673 M669.5 354 H673" stroke="#7a7a7a" stroke-width="1.600"/><path d="M682.5 357.5 H689.0" stroke="#000" stroke-width="1.200"/><path d="M682.5 359.5 H689.0 L685.75 363 Z" fill="#000"/><rect x="106.5" y="375.5" width="481.0" height="377.0" fill="#fff" stroke="#b8b8b8" stroke-width="1"/><rect x="163.5" y="376.0" width="57.0" height="376.0" fill="url(#pbg)"/><rect x="277.5" y="376.0" width="57.0" height="376.0" fill="url(#pbg)"/><rect x="391.5" y="376.0" width="57.0" height="376.0" fill="url(#pbg)"/><rect x="504.5" y="376.0" width="57.0" height="376.0" fill="url(#pbg)"/><path d="M163.5 376.0 V752.5 M220.5 376.0 V752.5 M277.5 376.0 V752.5 M334.5 376.0 V752.5 M391.5 376.0 V752.5 M448.5 376.0 V752.5 M504.5 376.0 V752.5 M561.5 376.0 V752.5 " stroke="#b2b2b2" stroke-width="1" stroke-dasharray="5 2" fill="none"/><path d="M107.0 702.5 H587.0 M107.0 652.5 H587.0 M107.0 603.5 H587.0 M107.0 553.5 H587.0 M107.0 503.5 H587.0 M107.0 454.5 H587.0 M107.0 404.5 H587.0 " stroke="#b2b2b2" stroke-width="1" stroke-dasharray="3 1" fill="none"/><path d="M106.5 375.0 V753.0 M106.0 752.5 H588.0" stroke="#303030" stroke-width="1" fill="none"/><path d="M101.0 752.5 H106.0 M104.0 735.5 H106.0 M104.0 719.5 H106.0 M101.0 702.5 H106.0 M104.0 685.5 H106.0 M104.0 669.5 H106.0 M101.0 652.5 H106.0 M104.0 636.5 H106.0 M104.0 619.5 H106.0 M101.0 603.5 H106.0 M104.0 586.5 H106.0 M104.0 570.5 H106.0 M101.0 553.5 H106.0 M104.0 536.5 H106.0 M104.0 520.5 H106.0 M101.0 503.5 H106.0 M104.0 487.5 H106.0 M104.0 470.5 H106.0 M101.0 454.5 H106.0 M104.0 437.5 H106.0 M104.0 421.5 H106.0 M101.0 404.5 H106.0 M104.0 387.5 H106.0 M107.5 753.0 V758.0 M118.5 753.0 V755.0 M129.5 753.0 V755.0 M141.5 753.0 V755.0 M152.5 753.0 V755.0 M163.5 753.0 V758.0 M175.5 753.0 V755.0 M186.5 753.0 V755.0 M197.5 753.0 V755.0 M209.5 753.0 V755.0 M220.5 753.0 V758.0 M232.5 753.0 V755.0 M243.5 753.0 V755.0 M254.5 753.0 V755.0 M266.5 753.0 V755.0 M277.5 753.0 V758.0 M288.5 753.0 V755.0 M300.5 753.0 V755.0 M311.5 753.0 V755.0 M322.5 753.0 V755.0 M334.5 753.0 V758.0 M345.5 753.0 V755.0 M357.5 753.0 V755.0 M368.5 753.0 V755.0 M379.5 753.0 V755.0 M391.5 753.0 V758.0 M402.5 753.0 V755.0 M413.5 753.0 V755.0 M425.5 753.0 V755.0 M436.5 753.0 V755.0 M448.5 753.0 V758.0 M459.5 753.0 V755.0 M470.5 753.0 V755.0 M482.5 753.0 V755.0 M493.5 753.0 V755.0 M504.5 753.0 V758.0 M516.5 753.0 V755.0 M527.5 753.0 V755.0 M538.5 753.0 V755.0 M550.5 753.0 V755.0 M561.5 753.0 V758.0 M573.5 753.0 V755.0 M584.5 753.0 V755.0 " stroke="#303030" stroke-width="1" fill="none"/><text x="97.500" y="756.1" font-size="10.600" text-anchor="end" fill="#0c0c0c">0</text><text x="97.500" y="706.1" font-size="10.600" text-anchor="end" fill="#0c0c0c">200</text><text x="97.500" y="656.1" font-size="10.600" text-anchor="end" fill="#0c0c0c">400</text><text x="97.500" y="607.1" font-size="10.600" text-anchor="end" fill="#0c0c0c">600</text><text x="97.500" y="557.1" font-size="10.600" text-anchor="end" fill="#0c0c0c">800</text><text x="97.500" y="507.1" font-size="10.600" text-anchor="end" fill="#0c0c0c">1000</text><text x="97.500" y="458.1" font-size="10.600" text-anchor="end" fill="#0c0c0c">1200</text><text x="97.500" y="408.1" font-size="10.600" text-anchor="end" fill="#0c0c0c">1400</text><text x="106.9" y="769" font-size="10.600" text-anchor="middle" fill="#0c0c0c">0</text><text x="162.9" y="769" font-size="10.600" text-anchor="middle" fill="#0c0c0c">2</text><text x="219.9" y="769" font-size="10.600" text-anchor="middle" fill="#0c0c0c">4</text><text x="276.9" y="769" font-size="10.600" text-anchor="middle" fill="#0c0c0c">6</text><text x="333.9" y="769" font-size="10.600" text-anchor="middle" fill="#0c0c0c">8</text><text x="390.9" y="769" font-size="10.600" text-anchor="middle" fill="#0c0c0c">10</text><text x="447.9" y="769" font-size="10.600" text-anchor="middle" fill="#0c0c0c">12</text><text x="503.9" y="769" font-size="10.600" text-anchor="middle" fill="#0c0c0c">14</text><text x="560.9" y="769" font-size="10.600" text-anchor="middle" fill="#0c0c0c">16</text><text x="320.200" y="787" font-size="10.700" fill="#0c0c0c" textLength="51.600">Length[m]</text><text transform="translate(68.500,586.700) rotate(-90)" font-size="10.700" fill="#0c0c0c" textLength="47.300">Power[w]</text><clipPath id="c1"><rect x="107" y="376" width="480.500" height="376"/></clipPath><g clip-path="url(#c1)"><marker id="mksq" viewBox="0 0 8 8" markerWidth="8" markerHeight="8" refX="4" refY="4" markerUnits="userSpaceOnUse" orient="0"><rect x="2.100" y="2.100" width="3.800" height="3.800" fill="#5050ff" stroke="#0404c0" stroke-width="1"/></marker><polyline points="106.7,508.7 109.5,508.7 112.4,508.7 115.2,508.7 118.1,508.7 120.9,508.7 123.8,508.7 126.6,508.7 129.4,508.7 132.3,508.7 135.1,508.7 138.0,508.7 140.8,517.1 143.6,524.4 146.5,531.2 149.3,537.4 152.2,543.3 155.0,549.0 157.9,554.5 160.7,560.0 163.5,565.5 166.4,571.0 169.2,576.4 172.1,581.8 174.9,587.0 177.8,592.1 180.6,596.9 183.4,601.4 186.3,605.6 189.1,609.5 192.0,613.1 194.8,616.5 197.6,619.7 200.5,622.9 203.3,626.0 206.2,629.0 209.0,632.2 211.9,635.4 214.7,638.8 217.5,642.5 220.4,646.3 223.2,649.6 226.1,652.7 228.9,655.6 231.7,658.4 234.6,661.1 237.4,663.6 240.3,666.0 243.1,668.3 246.0,670.5 248.8,672.6 251.6,674.6 254.5,676.5 257.3,678.3 260.2,680.1 263.0,681.7 265.9,683.3 268.7,684.9 271.5,686.4 274.4,687.8 277.2,689.2 280.1,690.5 282.9,691.8 285.7,693.1 288.6,694.3 291.4,695.4 294.3,696.5 297.1,697.6 300.0,698.7 302.8,699.8 305.6,700.9 308.5,701.9 311.3,703.0 314.2,704.0 317.0,705.0 319.9,706.0 322.7,707.0 325.5,707.9 328.4,708.8 331.2,709.7 334.1,710.5 336.9,711.3 339.7,712.1 342.6,712.9 345.4,713.6 348.3,714.3 351.1,715.0 354.0,715.6 356.8,716.3 359.6,716.9 362.5,717.5 365.3,718.0 368.2,718.6 371.0,719.1 373.8,719.6 376.7,720.1 379.5,720.6 382.4,721.0 385.2,721.5 388.1,722.0 390.9,722.4 393.7,722.9 396.6,723.4 399.4,723.8 402.3,724.3 405.1,724.8 408.0,725.2 410.8,725.7 413.6,726.1 416.5,726.5 419.3,727.0 422.2,727.4 425.0,727.8 427.8,728.2 430.7,728.6 433.5,728.9 436.4,729.3 439.2,729.7 442.1,730.0 444.9,730.3 447.7,730.6 450.6,730.9 453.4,731.2 456.3,731.5 459.1,731.8 461.9,732.0 464.8,732.3 467.6,732.5 470.5,732.8 473.3,733.0 476.2,733.3 479.0,733.5 481.8,733.7 484.7,733.9 487.5,734.1 490.4,734.3 493.2,734.6 496.1,734.8 498.9,734.9 501.7,735.1 504.6,735.3 507.4,735.5 510.3,735.7 513.1,735.9 515.9,736.0 518.8,736.2 521.6,736.4 524.5,736.5 527.3,736.7 530.2,736.9 533.0,737.0 535.8,737.2 538.7,737.3 541.5,737.4 544.4,737.6 547.2,737.7 550.1,737.9 552.9,738.0 555.7,738.2 558.6,738.3 561.4,738.3 564.3,738.3 567.1,738.3 569.9,738.3 572.8,738.3 575.6,738.3 578.5,738.3 581.3,738.3 584.2,738.3 587.0,738.3" fill="none" stroke="#0404c0" stroke-width="1.2" marker-start="url(#mksq)" marker-mid="url(#mksq)" marker-end="url(#mksq)"/><marker id="mkci" viewBox="0 0 8 8" markerWidth="8" markerHeight="8" refX="4" refY="4" markerUnits="userSpaceOnUse" orient="0"><circle cx="4" cy="4" r="2.050" fill="#454545" stroke="#141414" stroke-width="1"/></marker><polyline points="106.7,651.5 109.5,651.6 112.4,651.7 115.2,651.8 118.1,651.9 120.9,652.0 123.8,652.3 126.6,652.6 129.4,652.9 132.3,653.2 135.1,653.5 138.0,653.7 140.8,650.5 143.6,647.2 146.5,643.6 149.3,639.8 152.2,636.4 155.0,633.5 157.9,630.8 160.7,628.3 163.5,625.7 166.4,623.2 169.2,620.9 172.1,618.5 174.9,616.0 177.8,613.3 180.6,610.6 183.4,608.1 186.3,606.0 189.1,604.1 192.0,602.4 194.8,600.5 197.6,598.6 200.5,596.5 203.3,594.4 206.2,592.3 209.0,590.2 211.9,588.2 214.7,586.2 217.5,584.3 220.4,582.6 223.2,580.9 226.1,579.3 228.9,577.7 231.7,576.2 234.6,574.7 237.4,573.3 240.3,572.0 243.1,570.6 246.0,569.4 248.8,568.2 251.6,567.0 254.5,565.9 257.3,564.8 260.2,563.7 263.0,562.7 265.9,561.8 268.7,560.8 271.5,559.9 274.4,559.1 277.2,558.3 280.1,557.5 282.9,556.8 285.7,556.1 288.6,555.4 291.4,554.8 294.3,554.2 297.1,553.6 300.0,553.0 302.8,552.4 305.6,551.8 308.5,551.2 311.3,550.6 314.2,550.0 317.0,549.5 319.9,548.9 322.7,548.3 325.5,547.8 328.4,547.2 331.2,546.7 334.1,546.1 336.9,545.6 339.7,545.1 342.6,544.6 345.4,544.1 348.3,543.7 351.1,543.2 354.0,542.8 356.8,542.4 359.6,541.9 362.5,541.5 365.3,541.1 368.2,540.6 371.0,540.2 373.8,539.7 376.7,539.3 379.5,538.8 382.4,538.3 385.2,537.8 388.1,537.2 390.9,536.7 393.7,536.1 396.6,535.5 399.4,534.8 402.3,534.2 405.1,533.5 408.0,532.8 410.8,532.1 413.6,531.3 416.5,530.5 419.3,529.7 422.2,528.9 425.0,528.1 427.8,527.2 430.7,526.3 433.5,525.4 436.4,524.5 439.2,523.5 442.1,522.5 444.9,521.4 447.7,520.3 450.6,519.2 453.4,518.0 456.3,516.7 459.1,515.4 461.9,514.0 464.8,512.6 467.6,511.1 470.5,509.6 473.3,508.0 476.2,506.4 479.0,504.8 481.8,503.1 484.7,501.3 487.5,499.5 490.4,497.6 493.2,495.6 496.1,493.5 498.9,491.3 501.7,489.0 504.6,486.6 507.4,484.0 510.3,481.3 513.1,478.3 515.9,475.2 518.8,472.0 521.6,468.6 524.5,465.0 527.3,461.4 530.2,457.7 533.0,453.9 535.8,449.8 538.7,445.5 541.5,441.0 544.4,436.3 547.2,431.4 550.1,426.5 552.9,421.5 555.7,416.6 558.6,411.8 561.4,409.8 564.3,410.6 567.1,411.3 569.9,412.0 572.8,412.7 575.6,413.5 578.5,414.2 581.3,414.9 584.2,415.7 587.0,416.4" fill="none" stroke="#141414" stroke-width="1.2" marker-start="url(#mkci)" marker-mid="url(#mkci)" marker-end="url(#mkci)"/><marker id="mktr" viewBox="0 0 8 8" markerWidth="8" markerHeight="8" refX="4" refY="4" markerUnits="userSpaceOnUse" orient="0"><path d="M4 1.500L6.300 5.800H1.700Z" fill="#f048f0" stroke="#c010c0" stroke-width="1"/></marker><polyline points="106.7,738.8 109.5,738.7 112.4,738.6 115.2,738.5 118.1,738.4 120.9,738.3 123.8,738.3 126.6,738.2 129.4,738.1 132.3,738.0 135.1,737.9 138.0,737.8 140.8,737.7 143.6,737.6 146.5,737.5 149.3,737.4 152.2,737.3 155.0,737.2 157.9,737.1 160.7,736.9 163.5,736.8 166.4,736.7 169.2,736.6 172.1,736.4 174.9,736.3 177.8,736.2 180.6,736.0 183.4,735.9 186.3,735.7 189.1,735.6 192.0,735.4 194.8,735.3 197.6,735.1 200.5,734.9 203.3,734.7 206.2,734.6 209.0,734.4 211.9,734.2 214.7,734.0 217.5,733.8 220.4,733.6 223.2,733.4 226.1,733.2 228.9,732.9 231.7,732.7 234.6,732.5 237.4,732.2 240.3,732.0 243.1,731.7 246.0,731.4 248.8,731.1 251.6,730.8 254.5,730.5 257.3,730.2 260.2,729.9 263.0,729.6 265.9,729.3 268.7,728.9 271.5,728.6 274.4,728.2 277.2,727.9 280.1,727.5 282.9,727.1 285.7,726.8 288.6,726.4 291.4,725.9 294.3,725.5 297.1,725.1 300.0,724.6 302.8,724.2 305.6,723.7 308.5,723.2 311.3,722.7 314.2,722.2 317.0,721.7 319.9,721.1 322.7,720.6 325.5,720.0 328.4,719.4 331.2,718.8 334.1,718.2 336.9,717.6 339.7,716.9 342.6,716.3 345.4,715.6 348.3,714.9 351.1,714.1 354.0,713.4 356.8,712.6 359.6,711.8 362.5,711.0 365.3,710.1 368.2,709.2 371.0,708.3 373.8,707.4 376.7,706.5 379.5,705.5 382.4,704.5 385.2,703.5 388.1,702.4 390.9,701.4 393.7,700.2 396.6,699.1 399.4,697.9 402.3,696.7 405.1,695.5 408.0,694.2 410.8,692.8 413.6,691.4 416.5,690.0 419.3,688.5 422.2,686.9 425.0,685.2 427.8,683.4 430.7,681.6 433.5,679.6 436.4,677.7 439.2,675.6 442.1,673.6 444.9,671.5 447.7,669.4 450.6,667.2 453.4,665.1 456.3,662.9 459.1,660.7 461.9,658.4 464.8,656.1 467.6,653.7 470.5,651.3 473.3,648.7 476.2,646.1 479.0,643.3 481.8,640.4 484.7,637.5 487.5,634.4 490.4,631.3 493.2,628.0 496.1,624.7 498.9,621.2 501.7,617.6 504.6,613.8 507.4,609.9 510.3,605.9 513.1,601.8 515.9,597.4 518.8,593.0 521.6,588.3 524.5,583.5 527.3,578.5 530.2,573.3 533.0,567.9 535.8,562.2 538.7,556.2 541.5,550.0 544.4,543.7 547.2,537.3 550.1,530.9 552.9,524.4 555.7,517.7 558.6,510.8 561.4,508.7 564.3,508.7 567.1,508.7 569.9,508.7 572.8,508.7 575.6,508.7 578.5,508.7 581.3,508.7 584.2,508.7 587.0,508.7" fill="none" stroke="#c010c0" stroke-width="1.2" marker-start="url(#mktr)" marker-mid="url(#mktr)" marker-end="url(#mktr)"/><marker id="mkdi" viewBox="0 0 8 8" markerWidth="8" markerHeight="8" refX="4" refY="4" markerUnits="userSpaceOnUse" orient="0"><path d="M4 1.400L6.600 4L4 6.600L1.400 4Z" fill="#ff3c3c" stroke="#d01818" stroke-width="1"/></marker><polyline points="106.7,645.8 109.5,645.6 112.4,645.3 115.2,645.1 118.1,644.8 120.9,644.6 123.8,644.3 126.6,643.9 129.4,643.6 132.3,643.3 135.1,643.6 138.0,646.4 140.8,649.2 143.6,652.2 146.5,655.5 149.3,658.7 152.2,661.4 155.0,663.8 157.9,665.9 160.7,667.9 163.5,669.6 166.4,671.1 169.2,672.5 172.1,673.7 174.9,674.9 177.8,676.1 180.6,677.3 183.4,678.3 186.3,679.3 189.1,680.2 192.0,681.0 194.8,681.8 197.6,682.6 200.5,683.3 203.3,684.1 206.2,684.8 209.0,685.5 211.9,686.1 214.7,686.8 217.5,687.4 220.4,688.0 223.2,688.5 226.1,689.1 228.9,689.6 231.7,690.1 234.6,690.6 237.4,691.0 240.3,691.5 243.1,691.9 246.0,692.3 248.8,692.7 251.6,693.0 254.5,693.4 257.3,693.7 260.2,694.0 263.0,694.3 265.9,694.6 268.7,694.8 271.5,695.1 274.4,695.4 277.2,695.7 280.1,695.9 282.9,696.2 285.7,696.5 288.6,696.7 291.4,697.0 294.3,697.3 297.1,697.5 300.0,697.7 302.8,697.9 305.6,698.1 308.5,698.3 311.3,698.5 314.2,698.7 317.0,698.8 319.9,699.0 322.7,699.1 325.5,699.2 328.4,699.4 331.2,699.5 334.1,699.6 336.9,699.7 339.7,699.8 342.6,699.9 345.4,700.0 348.3,700.1 351.1,700.2 354.0,700.3 356.8,700.3 359.6,700.4 362.5,700.5 365.3,700.5 368.2,700.6 371.0,700.7 373.8,700.8 376.7,700.9 379.5,700.9 382.4,701.0 385.2,701.1 388.1,701.2 390.9,701.4 393.7,701.5 396.6,701.6 399.4,701.7 402.3,701.9 405.1,702.0 408.0,702.2 410.8,702.4 413.6,702.5 416.5,702.7 419.3,702.9 422.2,703.1 425.0,703.3 427.8,703.5 430.7,703.7 433.5,703.9 436.4,704.2 439.2,704.4 442.1,704.6 444.9,704.8 447.7,705.1 450.6,705.3 453.4,705.6 456.3,705.9 459.1,706.1 461.9,706.4 464.8,706.7 467.6,707.1 470.5,707.4 473.3,707.7 476.2,708.1 479.0,708.4 481.8,708.8 484.7,709.1 487.5,709.5 490.4,709.9 493.2,710.3 496.1,710.6 498.9,711.0 501.7,711.4 504.6,711.8 507.4,712.2 510.3,712.5 513.1,712.9 515.9,713.3 518.8,713.8 521.6,714.2 524.5,714.6 527.3,715.1 530.2,715.5 533.0,716.0 535.8,716.5 538.7,717.0 541.5,717.5 544.4,718.1 547.2,718.7 550.1,719.2 552.9,719.8 555.7,720.4 558.6,720.9 561.4,720.5 564.3,720.0 567.1,719.9 569.9,719.8 572.8,719.8 575.6,719.7 578.5,719.6 581.3,719.6 584.2,719.5 587.0,719.5" fill="none" stroke="#d01818" stroke-width="1.2" marker-start="url(#mkdi)" marker-mid="url(#mkdi)" marker-end="url(#mkdi)"/></g><rect x="432.500" y="543.500" width="144" height="74.500" fill="#fff" stroke="#bdbdbd" stroke-width="1"/><path d="M436.500 554.3 H455" stroke="#0a0ac8" stroke-width="1.100"/><rect x="440.8" y="549.3" width="10" height="10" fill="#3838f4" stroke="#0a0ac8" stroke-width="1"/><text x="458.3" y="558.1" font-size="10.700" fill="#0c0c0c" textLength="105.5">Positive Pump Power</text><path d="M436.500 572.3 H455" stroke="#151515" stroke-width="1.100"/><circle cx="445.8" cy="572.3" r="5.200" fill="#3a3a3a" stroke="#151515" stroke-width="1"/><text x="457" y="576.1" font-size="10.700" fill="#0c0c0c" textLength="108.8">Positive Signal Power</text><path d="M436.500 590.4 H455" stroke="#c214c2" stroke-width="1.100"/><path d="M445.8 584.9 L451.3 594.9 H440.3 Z" fill="#e33ce3" stroke="#c214c2" stroke-width="1"/><text x="458.3" y="594.2" font-size="10.700" fill="#0c0c0c" textLength="111">Negative Pump Power</text><path d="M436.500 608.4 H455" stroke="#cf1a1a" stroke-width="1.100"/><path d="M445.8 602.4 L451.8 608.4 L445.8 614.4 L439.8 608.4 Z" fill="#f03232" stroke="#cf1a1a" stroke-width="1"/><text x="458.3" y="612.2" font-size="10.700" fill="#0c0c0c" textLength="113.5">Negative Signal Power</text><rect x="665.5" y="376.5" width="540.0" height="375.0" fill="#fff" stroke="#b8b8b8" stroke-width="1"/><rect x="719.5" y="377.0" width="54.0" height="374.0" fill="url(#pbg)"/><rect x="827.5" y="377.0" width="54.0" height="374.0" fill="url(#pbg)"/><rect x="935.5" y="377.0" width="54.0" height="374.0" fill="url(#pbg)"/><rect x="1043.5" y="377.0" width="54.0" height="374.0" fill="url(#pbg)"/><rect x="1151.5" y="377.0" width="54.0" height="374.0" fill="url(#pbg)"/><path d="M719.5 377.0 V751.5 M773.5 377.0 V751.5 M827.5 377.0 V751.5 M881.5 377.0 V751.5 M935.5 377.0 V751.5 M989.5 377.0 V751.5 M1043.5 377.0 V751.5 M1097.5 377.0 V751.5 M1151.5 377.0 V751.5 " stroke="#b2b2b2" stroke-width="1" stroke-dasharray="5 2" fill="none"/><path d="M666.0 720.5 H1205.0 M666.0 688.5 H1205.0 M666.0 657.5 H1205.0 M666.0 625.5 H1205.0 M666.0 593.5 H1205.0 M666.0 562.5 H1205.0 M666.0 530.5 H1205.0 M666.0 499.5 H1205.0 M666.0 467.5 H1205.0 M666.0 436.5 H1205.0 M666.0 404.5 H1205.0 " stroke="#b2b2b2" stroke-width="1" stroke-dasharray="3 1" fill="none"/><path d="M665.5 376.0 V752.0 M665.0 751.5 H1206.0" stroke="#303030" stroke-width="1" fill="none"/><path d="M663.0 741.5 H665.0 M663.0 731.5 H665.0 M660.0 720.5 H665.0 M663.0 709.5 H665.0 M663.0 699.5 H665.0 M660.0 688.5 H665.0 M663.0 678.5 H665.0 M663.0 667.5 H665.0 M660.0 657.5 H665.0 M663.0 646.5 H665.0 M663.0 636.5 H665.0 M660.0 625.5 H665.0 M663.0 615.5 H665.0 M663.0 604.5 H665.0 M660.0 593.5 H665.0 M663.0 583.5 H665.0 M663.0 573.5 H665.0 M660.0 562.5 H665.0 M663.0 551.5 H665.0 M663.0 541.5 H665.0 M660.0 530.5 H665.0 M663.0 520.5 H665.0 M663.0 509.5 H665.0 M660.0 499.5 H665.0 M663.0 488.5 H665.0 M663.0 478.5 H665.0 M660.0 467.5 H665.0 M663.0 457.5 H665.0 M663.0 446.5 H665.0 M660.0 436.5 H665.0 M663.0 425.5 H665.0 M663.0 415.5 H665.0 M660.0 404.5 H665.0 M663.0 393.5 H665.0 M663.0 383.5 H665.0 M665.5 752.0 V757.0 M676.5 752.0 V754.0 M687.5 752.0 V754.0 M698.5 752.0 V754.0 M708.5 752.0 V754.0 M719.5 752.0 V757.0 M730.5 752.0 V754.0 M741.5 752.0 V754.0 M752.5 752.0 V754.0 M762.5 752.0 V754.0 M773.5 752.0 V757.0 M784.5 752.0 V754.0 M795.5 752.0 V754.0 M806.5 752.0 V754.0 M816.5 752.0 V754.0 M827.5 752.0 V757.0 M838.5 752.0 V754.0 M849.5 752.0 V754.0 M859.5 752.0 V754.0 M870.5 752.0 V754.0 M881.5 752.0 V757.0 M892.5 752.0 V754.0 M903.5 752.0 V754.0 M913.5 752.0 V754.0 M924.5 752.0 V754.0 M935.5 752.0 V757.0 M946.5 752.0 V754.0 M957.5 752.0 V754.0 M967.5 752.0 V754.0 M978.5 752.0 V754.0 M989.5 752.0 V757.0 M1000.5 752.0 V754.0 M1010.5 752.0 V754.0 M1021.5 752.0 V754.0 M1032.5 752.0 V754.0 M1043.5 752.0 V757.0 M1054.5 752.0 V754.0 M1064.5 752.0 V754.0 M1075.5 752.0 V754.0 M1086.5 752.0 V754.0 M1097.5 752.0 V757.0 M1108.5 752.0 V754.0 M1118.5 752.0 V754.0 M1129.5 752.0 V754.0 M1140.5 752.0 V754.0 M1151.5 752.0 V757.0 M1161.5 752.0 V754.0 M1172.5 752.0 V754.0 M1183.5 752.0 V754.0 M1194.5 752.0 V754.0 M1205.5 752.0 V757.0 " stroke="#303030" stroke-width="1" fill="none"/><text x="656.800" y="724.1" font-size="10.600" text-anchor="end" fill="#0c0c0c">0</text><text x="656.800" y="692.1" font-size="10.600" text-anchor="end" fill="#0c0c0c">0.1</text><text x="656.800" y="661.1" font-size="10.600" text-anchor="end" fill="#0c0c0c">0.2</text><text x="656.800" y="629.1" font-size="10.600" text-anchor="end" fill="#0c0c0c">0.3</text><text x="656.800" y="597.1" font-size="10.600" text-anchor="end" fill="#0c0c0c">0.4</text><text x="656.800" y="566.1" font-size="10.600" text-anchor="end" fill="#0c0c0c">0.5</text><text x="656.800" y="534.1" font-size="10.600" text-anchor="end" fill="#0c0c0c">0.6</text><text x="656.800" y="503.1" font-size="10.600" text-anchor="end" fill="#0c0c0c">0.7</text><text x="656.800" y="471.1" font-size="10.600" text-anchor="end" fill="#0c0c0c">0.8</text><text x="656.800" y="440.1" font-size="10.600" text-anchor="end" fill="#0c0c0c">0.9</text><text x="656.800" y="408.1" font-size="10.600" text-anchor="end" fill="#0c0c0c">1</text><clipPath id="c2"><rect x="613" y="365" width="602" height="433"/></clipPath><g clip-path="url(#c2)"><text x="665.5" y="768" font-size="10.600" text-anchor="middle" fill="#0c0c0c">1050</text><text x="719.5" y="768" font-size="10.600" text-anchor="middle" fill="#0c0c0c">1060</text><text x="773.5" y="768" font-size="10.600" text-anchor="middle" fill="#0c0c0c">1070</text><text x="827.5" y="768" font-size="10.600" text-anchor="middle" fill="#0c0c0c">1080</text><text x="881.5" y="768" font-size="10.600" text-anchor="middle" fill="#0c0c0c">1090</text><text x="935.5" y="768" font-size="10.600" text-anchor="middle" fill="#0c0c0c">1100</text><text x="989.5" y="768" font-size="10.600" text-anchor="middle" fill="#0c0c0c">1110</text><text x="1043.5" y="768" font-size="10.600" text-anchor="middle" fill="#0c0c0c">1120</text><text x="1097.5" y="768" font-size="10.600" text-anchor="middle" fill="#0c0c0c">1130</text><text x="1151.5" y="768" font-size="10.600" text-anchor="middle" fill="#0c0c0c">1140</text><text x="1205.5" y="768" font-size="10.600" text-anchor="middle" fill="#0c0c0c">1150</text></g><text x="892.600" y="786" font-size="10.700" fill="#0c0c0c" textLength="86">WaveLength[nm]</text><text transform="translate(635.300,593.100) rotate(-90)" font-size="10.700" fill="#0c0c0c" textLength="61.500">Power[dBW]</text><polyline points="802.7,720.0 803.8,719.7 804.9,719.1 805.9,718.2 807.0,716.8 808.1,714.7 809.2,711.6 810.3,707.2 811.3,700.9 812.4,692.5 813.5,681.5 814.6,667.4 815.6,650.1 816.7,629.3 817.8,605.2 818.9,578.3 820.0,549.5 821.0,519.7 822.1,490.6 823.2,463.6 824.3,440.5 825.3,422.7 826.4,411.5 827.5,407.7 828.6,411.5 829.7,422.7 830.7,440.5 831.8,463.6 832.9,490.6 834.0,519.7 835.0,549.5 836.1,578.3 837.2,605.2 838.3,629.3 839.4,650.1 840.4,667.4 841.5,681.5 842.6,692.5 843.7,700.9 844.7,707.2 845.8,711.6 846.9,714.7 848.0,716.8 849.1,718.2 850.1,719.1 851.2,719.7 852.3,720.0" fill="none" stroke="#b8692f" stroke-width="1.7" stroke-linejoin="round"/><path d="M801.6 720.0a1.1 1.1 0 1 0 2.2 0a1.1 1.1 0 1 0 -2.2 0zM802.7 719.7a1.1 1.1 0 1 0 2.2 0a1.1 1.1 0 1 0 -2.2 0zM803.8 719.1a1.1 1.1 0 1 0 2.2 0a1.1 1.1 0 1 0 -2.2 0zM804.8 718.2a1.1 1.1 0 1 0 2.2 0a1.1 1.1 0 1 0 -2.2 0zM805.9 716.8a1.1 1.1 0 1 0 2.2 0a1.1 1.1 0 1 0 -2.2 0zM807.0 714.7a1.1 1.1 0 1 0 2.2 0a1.1 1.1 0 1 0 -2.2 0zM808.1 711.6a1.1 1.1 0 1 0 2.2 0a1.1 1.1 0 1 0 -2.2 0zM809.2 707.2a1.1 1.1 0 1 0 2.2 0a1.1 1.1 0 1 0 -2.2 0zM810.2 700.9a1.1 1.1 0 1 0 2.2 0a1.1 1.1 0 1 0 -2.2 0zM811.3 692.5a1.1 1.1 0 1 0 2.2 0a1.1 1.1 0 1 0 -2.2 0zM812.4 681.5a1.1 1.1 0 1 0 2.2 0a1.1 1.1 0 1 0 -2.2 0zM813.5 667.4a1.1 1.1 0 1 0 2.2 0a1.1 1.1 0 1 0 -2.2 0zM814.5 650.1a1.1 1.1 0 1 0 2.2 0a1.1 1.1 0 1 0 -2.2 0zM815.6 629.3a1.1 1.1 0 1 0 2.2 0a1.1 1.1 0 1 0 -2.2 0zM816.7 605.2a1.1 1.1 0 1 0 2.2 0a1.1 1.1 0 1 0 -2.2 0zM817.8 578.3a1.1 1.1 0 1 0 2.2 0a1.1 1.1 0 1 0 -2.2 0zM818.9 549.5a1.1 1.1 0 1 0 2.2 0a1.1 1.1 0 1 0 -2.2 0zM819.9 519.7a1.1 1.1 0 1 0 2.2 0a1.1 1.1 0 1 0 -2.2 0zM821.0 490.6a1.1 1.1 0 1 0 2.2 0a1.1 1.1 0 1 0 -2.2 0zM822.1 463.6a1.1 1.1 0 1 0 2.2 0a1.1 1.1 0 1 0 -2.2 0zM823.2 440.5a1.1 1.1 0 1 0 2.2 0a1.1 1.1 0 1 0 -2.2 0zM824.2 422.7a1.1 1.1 0 1 0 2.2 0a1.1 1.1 0 1 0 -2.2 0zM825.3 411.5a1.1 1.1 0 1 0 2.2 0a1.1 1.1 0 1 0 -2.2 0zM826.4 407.7a1.1 1.1 0 1 0 2.2 0a1.1 1.1 0 1 0 -2.2 0zM827.5 411.5a1.1 1.1 0 1 0 2.2 0a1.1 1.1 0 1 0 -2.2 0zM828.6 422.7a1.1 1.1 0 1 0 2.2 0a1.1 1.1 0 1 0 -2.2 0zM829.6 440.5a1.1 1.1 0 1 0 2.2 0a1.1 1.1 0 1 0 -2.2 0zM830.7 463.6a1.1 1.1 0 1 0 2.2 0a1.1 1.1 0 1 0 -2.2 0zM831.8 490.6a1.1 1.1 0 1 0 2.2 0a1.1 1.1 0 1 0 -2.2 0zM832.9 519.7a1.1 1.1 0 1 0 2.2 0a1.1 1.1 0 1 0 -2.2 0zM833.9 549.5a1.1 1.1 0 1 0 2.2 0a1.1 1.1 0 1 0 -2.2 0zM835.0 578.3a1.1 1.1 0 1 0 2.2 0a1.1 1.1 0 1 0 -2.2 0zM836.1 605.2a1.1 1.1 0 1 0 2.2 0a1.1 1.1 0 1 0 -2.2 0zM837.2 629.3a1.1 1.1 0 1 0 2.2 0a1.1 1.1 0 1 0 -2.2 0zM838.3 650.1a1.1 1.1 0 1 0 2.2 0a1.1 1.1 0 1 0 -2.2 0zM839.3 667.4a1.1 1.1 0 1 0 2.2 0a1.1 1.1 0 1 0 -2.2 0zM840.4 681.5a1.1 1.1 0 1 0 2.2 0a1.1 1.1 0 1 0 -2.2 0zM841.5 692.5a1.1 1.1 0 1 0 2.2 0a1.1 1.1 0 1 0 -2.2 0zM842.6 700.9a1.1 1.1 0 1 0 2.2 0a1.1 1.1 0 1 0 -2.2 0zM843.6 707.2a1.1 1.1 0 1 0 2.2 0a1.1 1.1 0 1 0 -2.2 0zM844.7 711.6a1.1 1.1 0 1 0 2.2 0a1.1 1.1 0 1 0 -2.2 0zM845.8 714.7a1.1 1.1 0 1 0 2.2 0a1.1 1.1 0 1 0 -2.2 0zM846.9 716.8a1.1 1.1 0 1 0 2.2 0a1.1 1.1 0 1 0 -2.2 0zM848.0 718.2a1.1 1.1 0 1 0 2.2 0a1.1 1.1 0 1 0 -2.2 0zM849.0 719.1a1.1 1.1 0 1 0 2.2 0a1.1 1.1 0 1 0 -2.2 0zM850.1 719.7a1.1 1.1 0 1 0 2.2 0a1.1 1.1 0 1 0 -2.2 0zM851.2 720.0a1.1 1.1 0 1 0 2.2 0a1.1 1.1 0 1 0 -2.2 0z" fill="#b8692f" stroke="#8a4a1c" stroke-width="0.500"/><polyline points="805.9,720.0 807.0,719.8 808.1,719.3 809.2,718.7 810.3,717.8 811.3,716.5 812.4,714.9 813.5,712.6 814.6,709.8 815.6,706.3 816.7,702.1 817.8,697.2 818.9,691.8 820.0,685.9 821.0,679.9 822.1,674.1 823.2,668.6 824.3,663.9 825.3,660.3 826.4,658.1 827.5,657.3 828.6,658.1 829.7,660.3 830.7,663.9 831.8,668.6 832.9,674.1 834.0,679.9 835.0,685.9 836.1,691.8 837.2,697.2 838.3,702.1 839.4,706.3 840.4,709.8 841.5,712.6 842.6,714.9 843.7,716.5 844.7,717.8 845.8,718.7 846.9,719.3 848.0,719.8 849.1,720.0" fill="none" stroke="#e0a818" stroke-width="1.7" stroke-linejoin="round"/><path d="M804.8 720.0a1.1 1.1 0 1 0 2.2 0a1.1 1.1 0 1 0 -2.2 0zM805.9 719.8a1.1 1.1 0 1 0 2.2 0a1.1 1.1 0 1 0 -2.2 0zM807.0 719.3a1.1 1.1 0 1 0 2.2 0a1.1 1.1 0 1 0 -2.2 0zM808.1 718.7a1.1 1.1 0 1 0 2.2 0a1.1 1.1 0 1 0 -2.2 0zM809.2 717.8a1.1 1.1 0 1 0 2.2 0a1.1 1.1 0 1 0 -2.2 0zM810.2 716.5a1.1 1.1 0 1 0 2.2 0a1.1 1.1 0 1 0 -2.2 0zM811.3 714.9a1.1 1.1 0 1 0 2.2 0a1.1 1.1 0 1 0 -2.2 0zM812.4 712.6a1.1 1.1 0 1 0 2.2 0a1.1 1.1 0 1 0 -2.2 0zM813.5 709.8a1.1 1.1 0 1 0 2.2 0a1.1 1.1 0 1 0 -2.2 0zM814.5 706.3a1.1 1.1 0 1 0 2.2 0a1.1 1.1 0 1 0 -2.2 0zM815.6 702.1a1.1 1.1 0 1 0 2.2 0a1.1 1.1 0 1 0 -2.2 0zM816.7 697.2a1.1 1.1 0 1 0 2.2 0a1.1 1.1 0 1 0 -2.2 0zM817.8 691.8a1.1 1.1 0 1 0 2.2 0a1.1 1.1 0 1 0 -2.2 0zM818.9 685.9a1.1 1.1 0 1 0 2.2 0a1.1 1.1 0 1 0 -2.2 0zM819.9 679.9a1.1 1.1 0 1 0 2.2 0a1.1 1.1 0 1 0 -2.2 0zM821.0 674.1a1.1 1.1 0 1 0 2.2 0a1.1 1.1 0 1 0 -2.2 0zM822.1 668.6a1.1 1.1 0 1 0 2.2 0a1.1 1.1 0 1 0 -2.2 0zM823.2 663.9a1.1 1.1 0 1 0 2.2 0a1.1 1.1 0 1 0 -2.2 0zM824.2 660.3a1.1 1.1 0 1 0 2.2 0a1.1 1.1 0 1 0 -2.2 0zM825.3 658.1a1.1 1.1 0 1 0 2.2 0a1.1 1.1 0 1 0 -2.2 0zM826.4 657.3a1.1 1.1 0 1 0 2.2 0a1.1 1.1 0 1 0 -2.2 0zM827.5 658.1a1.1 1.1 0 1 0 2.2 0a1.1 1.1 0 1 0 -2.2 0zM828.6 660.3a1.1 1.1 0 1 0 2.2 0a1.1 1.1 0 1 0 -2.2 0zM829.6 663.9a1.1 1.1 0 1 0 2.2 0a1.1 1.1 0 1 0 -2.2 0zM830.7 668.6a1.1 1.1 0 1 0 2.2 0a1.1 1.1 0 1 0 -2.2 0zM831.8 674.1a1.1 1.1 0 1 0 2.2 0a1.1 1.1 0 1 0 -2.2 0zM832.9 679.9a1.1 1.1 0 1 0 2.2 0a1.1 1.1 0 1 0 -2.2 0zM833.9 685.9a1.1 1.1 0 1 0 2.2 0a1.1 1.1 0 1 0 -2.2 0zM835.0 691.8a1.1 1.1 0 1 0 2.2 0a1.1 1.1 0 1 0 -2.2 0zM836.1 697.2a1.1 1.1 0 1 0 2.2 0a1.1 1.1 0 1 0 -2.2 0zM837.2 702.1a1.1 1.1 0 1 0 2.2 0a1.1 1.1 0 1 0 -2.2 0zM838.3 706.3a1.1 1.1 0 1 0 2.2 0a1.1 1.1 0 1 0 -2.2 0zM839.3 709.8a1.1 1.1 0 1 0 2.2 0a1.1 1.1 0 1 0 -2.2 0zM840.4 712.6a1.1 1.1 0 1 0 2.2 0a1.1 1.1 0 1 0 -2.2 0zM841.5 714.9a1.1 1.1 0 1 0 2.2 0a1.1 1.1 0 1 0 -2.2 0zM842.6 716.5a1.1 1.1 0 1 0 2.2 0a1.1 1.1 0 1 0 -2.2 0zM843.6 717.8a1.1 1.1 0 1 0 2.2 0a1.1 1.1 0 1 0 -2.2 0zM844.7 718.7a1.1 1.1 0 1 0 2.2 0a1.1 1.1 0 1 0 -2.2 0zM845.8 719.3a1.1 1.1 0 1 0 2.2 0a1.1 1.1 0 1 0 -2.2 0zM846.9 719.8a1.1 1.1 0 1 0 2.2 0a1.1 1.1 0 1 0 -2.2 0zM848.0 720.0a1.1 1.1 0 1 0 2.2 0a1.1 1.1 0 1 0 -2.2 0z" fill="#e0a818" stroke="#b08008" stroke-width="0.500"/><polyline points="807.0,720.1 808.1,719.9 809.2,719.6 810.3,719.2 811.3,718.5 812.4,717.7 813.5,716.6 814.6,715.1 815.6,713.4 816.7,711.3 817.8,708.9 818.9,706.1 820.0,703.2 821.0,700.2 822.1,697.3 823.2,694.6 824.3,692.2 825.3,690.4 826.4,689.3 827.5,688.9 828.6,689.3 829.7,690.4 830.7,692.2 831.8,694.6 832.9,697.3 834.0,700.2 835.0,703.2 836.1,706.1 837.2,708.9 838.3,711.3 839.4,713.4 840.4,715.1 841.5,716.6 842.6,717.7 843.7,718.5 844.7,719.2 845.8,719.6 846.9,719.9 848.0,720.1" fill="none" stroke="#a3843c" stroke-width="1.7" stroke-linejoin="round"/><path d="M805.9 720.1a1.1 1.1 0 1 0 2.2 0a1.1 1.1 0 1 0 -2.2 0zM807.0 719.9a1.1 1.1 0 1 0 2.2 0a1.1 1.1 0 1 0 -2.2 0zM808.1 719.6a1.1 1.1 0 1 0 2.2 0a1.1 1.1 0 1 0 -2.2 0zM809.2 719.2a1.1 1.1 0 1 0 2.2 0a1.1 1.1 0 1 0 -2.2 0zM810.2 718.5a1.1 1.1 0 1 0 2.2 0a1.1 1.1 0 1 0 -2.2 0zM811.3 717.7a1.1 1.1 0 1 0 2.2 0a1.1 1.1 0 1 0 -2.2 0zM812.4 716.6a1.1 1.1 0 1 0 2.2 0a1.1 1.1 0 1 0 -2.2 0zM813.5 715.1a1.1 1.1 0 1 0 2.2 0a1.1 1.1 0 1 0 -2.2 0zM814.5 713.4a1.1 1.1 0 1 0 2.2 0a1.1 1.1 0 1 0 -2.2 0zM815.6 711.3a1.1 1.1 0 1 0 2.2 0a1.1 1.1 0 1 0 -2.2 0zM816.7 708.9a1.1 1.1 0 1 0 2.2 0a1.1 1.1 0 1 0 -2.2 0zM817.8 706.1a1.1 1.1 0 1 0 2.2 0a1.1 1.1 0 1 0 -2.2 0zM818.9 703.2a1.1 1.1 0 1 0 2.2 0a1.1 1.1 0 1 0 -2.2 0zM819.9 700.2a1.1 1.1 0 1 0 2.2 0a1.1 1.1 0 1 0 -2.2 0zM821.0 697.3a1.1 1.1 0 1 0 2.2 0a1.1 1.1 0 1 0 -2.2 0zM822.1 694.6a1.1 1.1 0 1 0 2.2 0a1.1 1.1 0 1 0 -2.2 0zM823.2 692.2a1.1 1.1 0 1 0 2.2 0a1.1 1.1 0 1 0 -2.2 0zM824.2 690.4a1.1 1.1 0 1 0 2.2 0a1.1 1.1 0 1 0 -2.2 0zM825.3 689.3a1.1 1.1 0 1 0 2.2 0a1.1 1.1 0 1 0 -2.2 0zM826.4 688.9a1.1 1.1 0 1 0 2.2 0a1.1 1.1 0 1 0 -2.2 0zM827.5 689.3a1.1 1.1 0 1 0 2.2 0a1.1 1.1 0 1 0 -2.2 0zM828.6 690.4a1.1 1.1 0 1 0 2.2 0a1.1 1.1 0 1 0 -2.2 0zM829.6 692.2a1.1 1.1 0 1 0 2.2 0a1.1 1.1 0 1 0 -2.2 0zM830.7 694.6a1.1 1.1 0 1 0 2.2 0a1.1 1.1 0 1 0 -2.2 0zM831.8 697.3a1.1 1.1 0 1 0 2.2 0a1.1 1.1 0 1 0 -2.2 0zM832.9 700.2a1.1 1.1 0 1 0 2.2 0a1.1 1.1 0 1 0 -2.2 0zM833.9 703.2a1.1 1.1 0 1 0 2.2 0a1.1 1.1 0 1 0 -2.2 0zM835.0 706.1a1.1 1.1 0 1 0 2.2 0a1.1 1.1 0 1 0 -2.2 0zM836.1 708.9a1.1 1.1 0 1 0 2.2 0a1.1 1.1 0 1 0 -2.2 0zM837.2 711.3a1.1 1.1 0 1 0 2.2 0a1.1 1.1 0 1 0 -2.2 0zM838.3 713.4a1.1 1.1 0 1 0 2.2 0a1.1 1.1 0 1 0 -2.2 0zM839.3 715.1a1.1 1.1 0 1 0 2.2 0a1.1 1.1 0 1 0 -2.2 0zM840.4 716.6a1.1 1.1 0 1 0 2.2 0a1.1 1.1 0 1 0 -2.2 0zM841.5 717.7a1.1 1.1 0 1 0 2.2 0a1.1 1.1 0 1 0 -2.2 0zM842.6 718.5a1.1 1.1 0 1 0 2.2 0a1.1 1.1 0 1 0 -2.2 0zM843.6 719.2a1.1 1.1 0 1 0 2.2 0a1.1 1.1 0 1 0 -2.2 0zM844.7 719.6a1.1 1.1 0 1 0 2.2 0a1.1 1.1 0 1 0 -2.2 0zM845.8 719.9a1.1 1.1 0 1 0 2.2 0a1.1 1.1 0 1 0 -2.2 0zM846.9 720.1a1.1 1.1 0 1 0 2.2 0a1.1 1.1 0 1 0 -2.2 0z" fill="#a3843c" stroke="#806428" stroke-width="0.500"/><polyline points="822.1,720.3 823.2,719.3 824.3,715.6 825.3,707.5 826.4,697.1 827.5,692.1 828.6,697.1 829.7,707.5 830.7,715.6 831.8,719.3 832.9,720.3" fill="none" stroke="#78924e" stroke-width="1.5" stroke-linejoin="round"/><path d="M821.0 720.3a1.1 1.1 0 1 0 2.2 0a1.1 1.1 0 1 0 -2.2 0zM822.1 719.3a1.1 1.1 0 1 0 2.2 0a1.1 1.1 0 1 0 -2.2 0zM823.2 715.6a1.1 1.1 0 1 0 2.2 0a1.1 1.1 0 1 0 -2.2 0zM824.2 707.5a1.1 1.1 0 1 0 2.2 0a1.1 1.1 0 1 0 -2.2 0zM825.3 697.1a1.1 1.1 0 1 0 2.2 0a1.1 1.1 0 1 0 -2.2 0zM826.4 692.1a1.1 1.1 0 1 0 2.2 0a1.1 1.1 0 1 0 -2.2 0zM827.5 697.1a1.1 1.1 0 1 0 2.2 0a1.1 1.1 0 1 0 -2.2 0zM828.6 707.5a1.1 1.1 0 1 0 2.2 0a1.1 1.1 0 1 0 -2.2 0zM829.6 715.6a1.1 1.1 0 1 0 2.2 0a1.1 1.1 0 1 0 -2.2 0zM830.7 719.3a1.1 1.1 0 1 0 2.2 0a1.1 1.1 0 1 0 -2.2 0zM831.8 720.3a1.1 1.1 0 1 0 2.2 0a1.1 1.1 0 1 0 -2.2 0z" fill="#78924e" stroke="#587038" stroke-width="0.500"/><polyline points="823.2,720.2 824.3,719.4 825.3,717.6 826.4,715.3 827.5,714.2 828.6,715.3 829.7,717.6 830.7,719.4 831.8,720.2" fill="none" stroke="#c9a030" stroke-width="1.5" stroke-linejoin="round"/><path d="M822.1 720.2a1.1 1.1 0 1 0 2.2 0a1.1 1.1 0 1 0 -2.2 0zM823.2 719.4a1.1 1.1 0 1 0 2.2 0a1.1 1.1 0 1 0 -2.2 0zM824.2 717.6a1.1 1.1 0 1 0 2.2 0a1.1 1.1 0 1 0 -2.2 0zM825.3 715.3a1.1 1.1 0 1 0 2.2 0a1.1 1.1 0 1 0 -2.2 0zM826.4 714.2a1.1 1.1 0 1 0 2.2 0a1.1 1.1 0 1 0 -2.2 0zM827.5 715.3a1.1 1.1 0 1 0 2.2 0a1.1 1.1 0 1 0 -2.2 0zM828.6 717.6a1.1 1.1 0 1 0 2.2 0a1.1 1.1 0 1 0 -2.2 0zM829.6 719.4a1.1 1.1 0 1 0 2.2 0a1.1 1.1 0 1 0 -2.2 0zM830.7 720.2a1.1 1.1 0 1 0 2.2 0a1.1 1.1 0 1 0 -2.2 0z" fill="#c9a030" stroke="#a08020" stroke-width="0.500"/><polyline points="665.8,720.5 666.9,720.5 668.0,720.5 669.0,720.5 670.1,720.5 671.2,720.5 672.3,720.5 673.3,720.5 674.4,720.5 675.5,720.5 676.6,720.5 677.7,720.5 678.7,720.5 679.8,720.5 680.9,720.5 682.0,720.5 683.0,720.5 684.1,720.5 685.2,720.5 686.3,720.5 687.4,720.5 688.4,720.5 689.5,720.5 690.6,720.5 691.7,720.5 692.8,720.5 693.8,720.5 694.9,720.5 696.0,720.5 697.1,720.5 698.1,720.5 699.2,720.5 700.3,720.5 701.4,720.5 702.5,720.5 703.5,720.5 704.6,720.5 705.7,720.5 706.8,720.5 707.8,720.5 708.9,720.5 710.0,720.5 711.1,720.5 712.2,720.5 713.2,720.5 714.3,720.5 715.4,720.5 716.5,720.5 717.5,720.5 718.6,720.5 719.7,720.5 720.8,720.5 721.9,720.5 722.9,720.5 724.0,720.5 725.1,720.5 726.2,720.5 727.2,720.5 728.3,720.5 729.4,720.5 730.5,720.5 731.6,720.5 732.6,720.5 733.7,720.5 734.8,720.5 735.9,720.5 736.9,720.5 738.0,720.5 739.1,720.5 740.2,720.5 741.3,720.5 742.3,720.5 743.4,720.5 744.5,720.5 745.6,720.5 746.7,720.5 747.7,720.5 748.8,720.5 749.9,720.5 751.0,720.5 752.0,720.5 753.1,720.5 754.2,720.5 755.3,720.5 756.4,720.5 757.4,720.5 758.5,720.5 759.6,720.5 760.7,720.5 761.7,720.5 762.8,720.5 763.9,720.5 765.0,720.5 766.1,720.5 767.1,720.5 768.2,720.5 769.3,720.5 770.4,720.5 771.4,720.5 772.5,720.5 773.6,720.5 774.7,720.5 775.8,720.5 776.8,720.5 777.9,720.5 779.0,720.5 780.1,720.5 781.1,720.5 782.2,720.5 783.3,720.5 784.4,720.5 785.5,720.5 786.5,720.5 787.6,720.5 788.7,720.5 789.8,720.5 790.8,720.5 791.9,720.5 793.0,720.5 794.1,720.5 795.2,720.5 796.2,720.5 797.3,720.5 798.4,720.5 799.5,720.5 800.6,720.5 801.6,720.5 802.7,720.5 803.8,720.5 804.9,720.5 805.9,720.5 807.0,720.5 808.1,720.5 809.2,720.5 810.3,720.5 811.3,720.5 812.4,720.5 813.5,720.5 814.6,720.5 815.6,720.5 816.7,720.5 817.8,720.5 818.9,720.5 820.0,720.5 821.0,720.5 822.1,720.5 823.2,720.4 824.3,720.0 825.3,719.1 826.4,717.9 827.5,717.3 828.6,717.9 829.7,719.1 830.7,720.0 831.8,720.4 832.9,720.5 834.0,720.5 835.0,720.5 836.1,720.5 837.2,720.5 838.3,720.5 839.4,720.5 840.4,720.5 841.5,720.5 842.6,720.5 843.7,720.5 844.7,720.5 845.8,720.5 846.9,720.5 848.0,720.5 849.1,720.5 850.1,720.5 851.2,720.5 852.3,720.5 853.4,720.5 854.5,720.5 855.5,720.5 856.6,720.5 857.7,720.5 858.8,720.5 859.8,720.5 860.9,720.5 862.0,720.5 863.1,720.5 864.2,720.5 865.2,720.5 866.3,720.5 867.4,720.5 868.5,720.5 869.5,720.5 870.6,720.5 871.7,720.5 872.8,720.5 873.9,720.5 874.9,720.5 876.0,720.5 877.1,720.5 878.2,720.5 879.2,720.5 880.3,720.5 881.4,720.5 882.5,720.5 883.6,720.5 884.6,720.5 885.7,720.5 886.8,720.5 887.9,720.5 888.9,720.5 890.0,720.5 891.1,720.5 892.2,720.5 893.3,720.5 894.3,720.5 895.4,720.5 896.5,720.5 897.6,720.5 898.6,720.5 899.7,720.5 900.8,720.5 901.9,720.5 903.0,720.5 904.0,720.5 905.1,720.5 906.2,720.5 907.3,720.5 908.4,720.5 909.4,720.5 910.5,720.5 911.6,720.5 912.7,720.5 913.7,720.5 914.8,720.5 915.9,720.5 917.0,720.5 918.1,720.5 919.1,720.5 920.2,720.5 921.3,720.5 922.4,720.5 923.4,720.5 924.5,720.5 925.6,720.5 926.7,720.5 927.8,720.5 928.8,720.5 929.9,720.5 931.0,720.5 932.1,720.5 933.1,720.5 934.2,720.5 935.3,720.5 936.4,720.5 937.5,720.5 938.5,720.5 939.6,720.5 940.7,720.5 941.8,720.5 942.8,720.5 943.9,720.5 945.0,720.5 946.1,720.5 947.2,720.5 948.2,720.5 949.3,720.5 950.4,720.5 951.5,720.5 952.5,720.5 953.6,720.5 954.7,720.5 955.8,720.5 956.9,720.5 957.9,720.5 959.0,720.5 960.1,720.5 961.2,720.5 962.3,720.5 963.3,720.5 964.4,720.5 965.5,720.5 966.6,720.5 967.6,720.5 968.7,720.5 969.8,720.5 970.9,720.5 972.0,720.5 973.0,720.5 974.1,720.5 975.2,720.5 976.3,720.5 977.3,720.5 978.4,720.5 979.5,720.5 980.6,720.5 981.7,720.5 982.7,720.5 983.8,720.5 984.9,720.5 986.0,720.5 987.0,720.5 988.1,720.5 989.2,720.5 990.3,720.5 991.4,720.5 992.4,720.5 993.5,720.5 994.6,720.5 995.7,720.5 996.7,720.5 997.8,720.5 998.9,720.5 1000.0,720.5 1001.1,720.5 1002.1,720.5 1003.2,720.5 1004.3,720.5 1005.4,720.5 1006.4,720.5 1007.5,720.5 1008.6,720.5 1009.7,720.5 1010.8,720.5 1011.8,720.5 1012.9,720.5 1014.0,720.5 1015.1,720.5 1016.2,720.5 1017.2,720.5 1018.3,720.5 1019.4,720.5 1020.5,720.5 1021.5,720.5 1022.6,720.5 1023.7,720.5 1024.8,720.5 1025.9,720.5 1026.9,720.5 1028.0,720.5 1029.1,720.5 1030.2,720.5 1031.2,720.5 1032.3,720.5 1033.4,720.5 1034.5,720.5 1035.6,720.5 1036.6,720.5 1037.7,720.5 1038.8,720.5 1039.9,720.5 1040.9,720.5 1042.0,720.5 1043.1,720.5 1044.2,720.5 1045.3,720.5 1046.3,720.5 1047.4,720.5 1048.5,720.5 1049.6,720.5 1050.6,720.5 1051.7,720.5 1052.8,720.5 1053.9,720.5 1055.0,720.5 1056.0,720.5 1057.1,720.5 1058.2,720.5 1059.3,720.5 1060.3,720.5 1061.4,720.5 1062.5,720.5 1063.6,720.5 1064.7,720.5 1065.7,720.5 1066.8,720.5 1067.9,720.5 1069.0,720.5 1070.1,720.5 1071.1,720.5 1072.2,720.5 1073.3,720.5 1074.4,720.5 1075.4,720.5 1076.5,720.5 1077.6,720.5 1078.7,720.5 1079.8,720.5 1080.8,720.5 1081.9,720.5 1083.0,720.5 1084.1,720.5 1085.1,720.5 1086.2,720.5 1087.3,720.5 1088.4,720.5 1089.5,720.5 1090.5,720.5 1091.6,720.5 1092.7,720.5 1093.8,720.5 1094.8,720.5 1095.9,720.5 1097.0,720.5 1098.1,720.5 1099.2,720.5 1100.2,720.5 1101.3,720.5 1102.4,720.5 1103.5,720.5 1104.5,720.5 1105.6,720.5 1106.7,720.5 1107.8,720.5 1108.9,720.5 1109.9,720.5 1111.0,720.5 1112.1,720.5 1113.2,720.5 1114.2,720.5 1115.3,720.5 1116.4,720.5 1117.5,720.5 1118.6,720.5 1119.6,720.5 1120.7,720.5 1121.8,720.5 1122.9,720.5 1124.0,720.5 1125.0,720.5 1126.1,720.5 1127.2,720.5 1128.3,720.5 1129.3,720.5 1130.4,720.5 1131.5,720.5 1132.6,720.5 1133.7,720.5 1134.7,720.5 1135.8,720.5 1136.9,720.5 1138.0,720.5 1139.0,720.5 1140.1,720.5 1141.2,720.5 1142.3,720.5 1143.4,720.5 1144.4,720.5 1145.5,720.5 1146.6,720.5 1147.7,720.5 1148.7,720.5 1149.8,720.5 1150.9,720.5 1152.0,720.5 1153.1,720.5 1154.1,720.5 1155.2,720.5 1156.3,720.5 1157.4,720.5 1158.4,720.5 1159.5,720.5 1160.6,720.5 1161.7,720.5 1162.8,720.5 1163.8,720.5 1164.9,720.5 1166.0,720.5 1167.1,720.5 1168.1,720.5 1169.2,720.5 1170.3,720.5 1171.4,720.5 1172.5,720.5 1173.5,720.5 1174.6,720.5 1175.7,720.5 1176.8,720.5 1177.9,720.5 1178.9,720.5 1180.0,720.5 1181.1,720.5 1182.2,720.5 1183.2,720.5 1184.3,720.5 1185.4,720.5 1186.5,720.5 1187.6,720.5 1188.6,720.5 1189.7,720.5 1190.8,720.5 1191.9,720.5 1192.9,720.5 1194.0,720.5 1195.1,720.5 1196.2,720.5 1197.3,720.5 1198.3,720.5 1199.4,720.5 1200.5,720.5 1201.6,720.5 1202.6,720.5 1203.7,720.5 1204.8,720.5" fill="none" stroke="#3f4336" stroke-width="3.200" stroke-linejoin="round"/><path d="M665.8 720.5 H1205.3" stroke="#6a6a4a" stroke-width="0.800" stroke-dasharray="0.800 4.600" fill="none"/><rect x="1110.500" y="386.500" width="84" height="147" fill="#fff" stroke="#bdbdbd" stroke-width="1"/><path d="M1114.500 397.2 H1133" stroke="#9a5a30" stroke-width="1.100"/><circle cx="1123.700" cy="397.2" r="5.200" fill="#c6824f" stroke="#9a5a30" stroke-width="1"/><text x="1137.500" y="401.0" font-size="10.700" fill="#0c0c0c" textLength="50">HR FBG, 1</text><path d="M1114.500 415.2 H1133" stroke="#66784a" stroke-width="1.100"/><circle cx="1123.700" cy="415.2" r="5.200" fill="#8ea26c" stroke="#66784a" stroke-width="1"/><text x="1137.500" y="419.0" font-size="10.700" fill="#0c0c0c" textLength="50">OC FBG, 1</text><path d="M1114.500 433.1 H1133" stroke="#c08a10" stroke-width="1.100"/><circle cx="1123.700" cy="433.1" r="5.200" fill="#f2b92c" stroke="#c08a10" stroke-width="1"/><text x="1137.500" y="436.9" font-size="10.700" fill="#0c0c0c" textLength="50">HR FBG, 2</text><path d="M1114.500 451.1 H1133" stroke="#a98a20" stroke-width="1.100"/><circle cx="1123.700" cy="451.1" r="5.200" fill="#dfba3e" stroke="#a98a20" stroke-width="1"/><text x="1137.500" y="454.9" font-size="10.700" fill="#0c0c0c" textLength="50">OC FBG, 2</text><path d="M1114.500 469.1 H1133" stroke="#a9621c" stroke-width="1.100"/><circle cx="1123.700" cy="469.1" r="5.200" fill="#df8d3a" stroke="#a9621c" stroke-width="1"/><text x="1137.500" y="472.9" font-size="10.700" fill="#0c0c0c" textLength="50">HR FBG, 3</text><path d="M1114.500 487.0 H1133" stroke="#676d34" stroke-width="1.100"/><circle cx="1123.700" cy="487.0" r="5.200" fill="#8f9652" stroke="#676d34" stroke-width="1"/><text x="1137.500" y="490.8" font-size="10.700" fill="#0c0c0c" textLength="50">OC FBG, 3</text><path d="M1114.500 505.0 H1133" stroke="#8f7a3c" stroke-width="1.100"/><circle cx="1123.700" cy="505.0" r="5.200" fill="#c0a862" stroke="#8f7a3c" stroke-width="1"/><text x="1137.500" y="508.8" font-size="10.700" fill="#0c0c0c" textLength="50">HR FBG, 4</text><path d="M1114.500 523.0 H1133" stroke="#45493c" stroke-width="1.100"/><circle cx="1123.700" cy="523.0" r="5.200" fill="#6b7060" stroke="#45493c" stroke-width="1"/><text x="1137.500" y="526.8" font-size="10.700" fill="#0c0c0c" textLength="50">OC FBG, 4</text></svg>
</body></html>
